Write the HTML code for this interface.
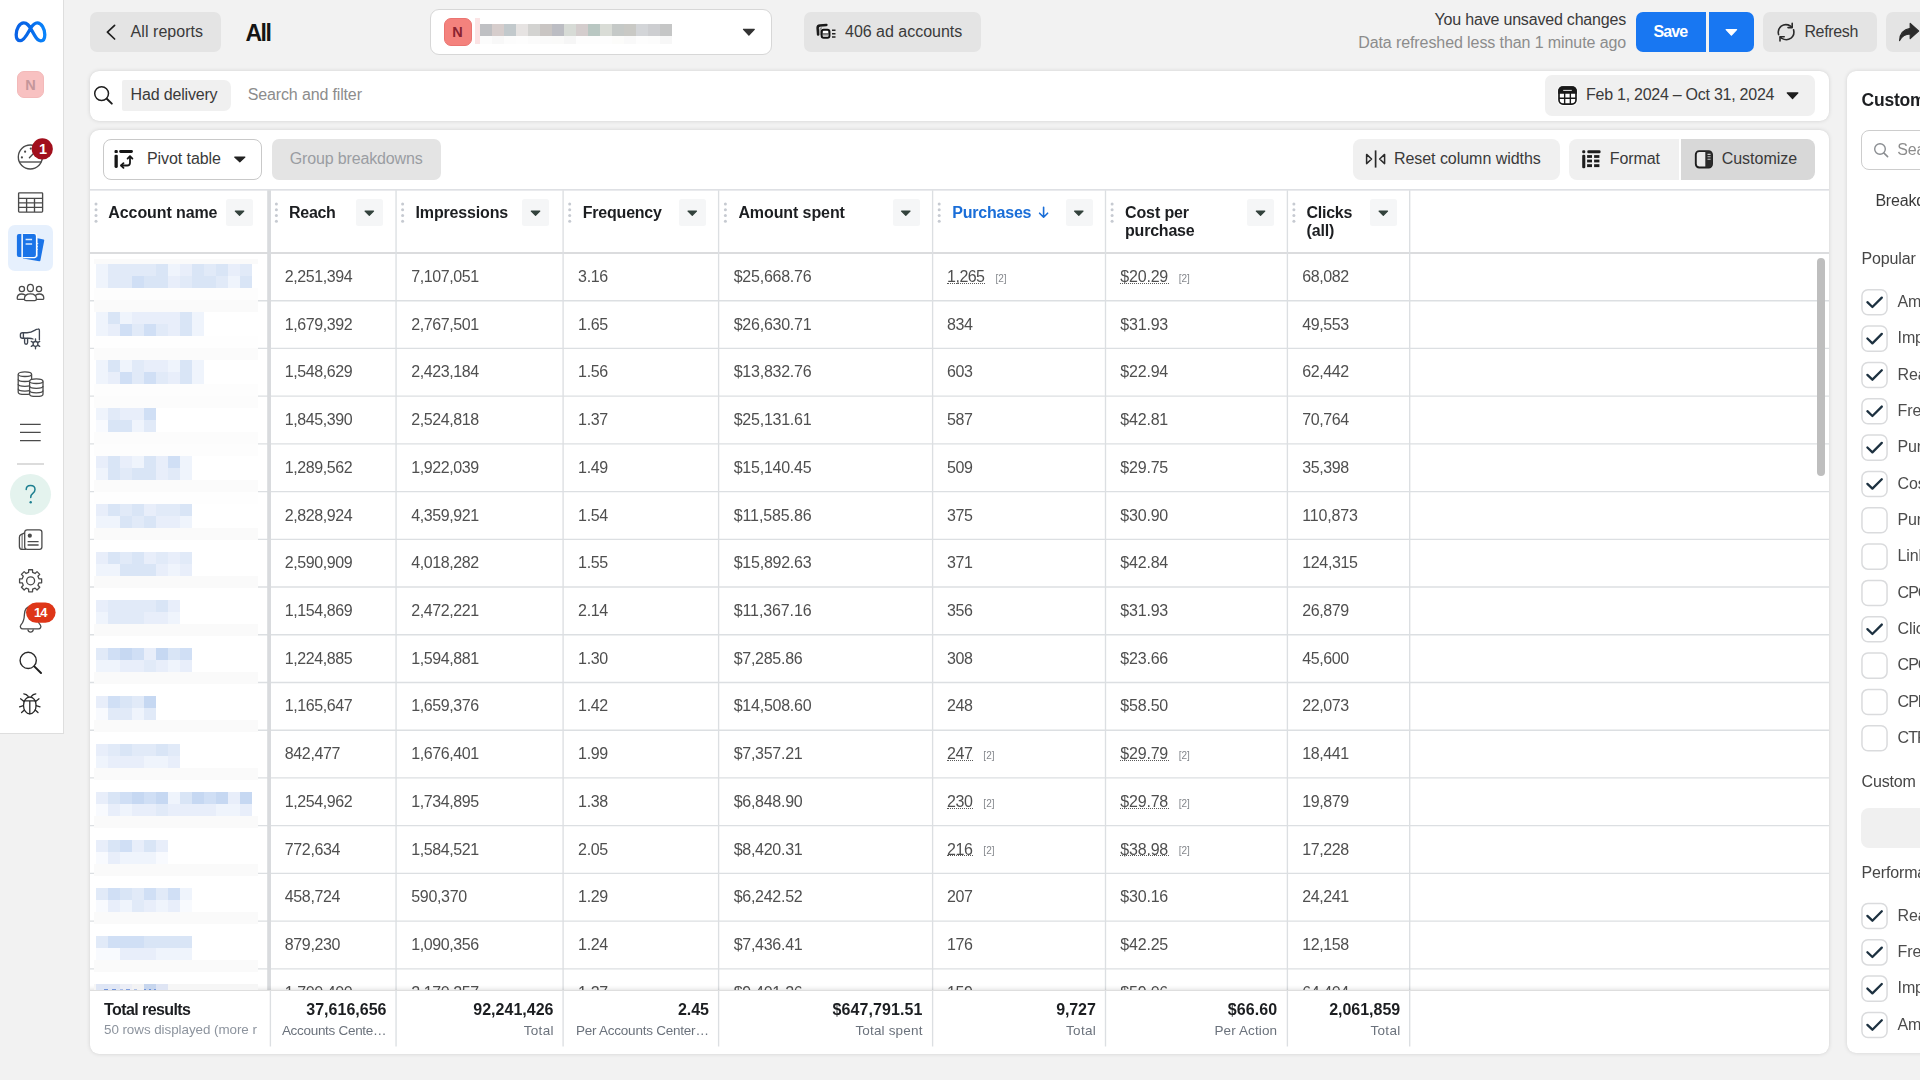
<!DOCTYPE html>
<html><head><meta charset="utf-8"><title>Reports</title>
<style>
html,body{margin:0;padding:0;}
body{width:1920px;height:1080px;overflow:hidden;background:#f2f2f2;font-family:"Liberation Sans",sans-serif;position:relative;}
.a{position:absolute;display:block;}
.t{position:absolute;white-space:nowrap;display:block;}
</style></head><body>
<div class="a" style="left:0.00px;top:0.00px;width:63.60px;height:734.40px;background:#fff;border-right:1.5px solid #dedede;border-bottom:1.4px solid #dedede;box-sizing:border-box;"></div>
<svg class="a" style="left:10px;top:16px;" width="42" height="32" viewBox="0 0 42 32"><defs><linearGradient id="mg" x1="0" y1="0" x2="1" y2="0"><stop offset="0" stop-color="#0a63e6"/><stop offset="0.45" stop-color="#0668e8"/><stop offset="1" stop-color="#0a84fb"/></linearGradient></defs><path d="M10.3 24.7 C7.5 24.7 6.2 22 6.2 18.7 C6.2 13 9.5 6.8 13.7 6.8 C17.2 6.8 19 9.6 21.3 13.6 L24.6 19.4 C26.6 22.9 28.2 24.8 30.8 24.8 C33.5 24.8 34.8 22.5 34.8 18.7 C34.8 13 31.5 6.8 27.3 6.8 C24.4 6.8 22.4 9.2 20.4 12.6 C18 16.8 14.3 24.7 10.3 24.7 Z" fill="none" stroke="url(#mg)" stroke-width="3.3" stroke-linejoin="round"/></svg>
<div class="a" style="left:17.00px;top:70.90px;width:26.90px;height:26.80px;background:#f8c1c1;border-radius:7px;border:1px solid #f3b9b9;box-sizing:border-box;"></div>
<span class="t" style="top:75.00px;font-size:14.5px;line-height:20px;color:#c4969a;font-weight:700;left:25.30px;">N</span>
<svg class="a" style="left:14px;top:136px;" width="44" height="38" viewBox="0 0 44 38"><g fill="none" stroke="#4a4a4a" stroke-width="1.35"><circle cx="16.3" cy="21" r="12"/><path d="M5.3 26 H27.3"/><path d="M15.4 21.7 L19 18" stroke-linecap="round"/></g><g fill="#4a4a4a"><circle cx="7.9" cy="21.4" r="1.1"/><circle cx="11.1" cy="15.7" r="1.1"/><circle cx="16.8" cy="12.6" r="1.1"/></g><circle cx="28.3" cy="12.9" r="10.6" fill="#a10f1c"/></svg>
<span class="t" style="top:139.00px;font-size:14.5px;line-height:20px;color:#fff;font-weight:700;left:39.00px;">1</span>
<svg class="a" style="left:16px;top:190px;" width="30" height="26" viewBox="0 0 30 26"><g fill="none" stroke="#4a4a4a" stroke-width="1.35"><rect x="2.6" y="2.8" width="24" height="19.3" rx="0.8"/><path d="M2.6 8.4 H26.6 M2.6 12.9 H26.6 M2.6 17.4 H26.6 M10.6 8.4 V22 M18.5 8.4 V22"/></g></svg>
<div class="a" style="left:7.90px;top:225.10px;width:45.20px;height:45.60px;background:#e6f0fd;border-radius:7px;"></div>
<svg class="a" style="left:14px;top:230px;" width="34" height="36" viewBox="0 0 34 36"><g fill="#1b74e8"><path d="M23.6 8.2 L29.6 9.6 Q30.4 9.9 30.2 10.8 L26.4 30.4 Q26.2 31.4 25.2 31.2 L9.2 28.4 V26.6 H23.6 Z"/></g><rect x="8" y="3.2" width="15" height="25" rx="2.4" fill="#fff"/><g fill="#1b74e8"><path d="M4.9 4 H7.3 V27 H4.9 Q2.9 27 2.9 25 V6 Q2.9 4 4.9 4 Z"/><path d="M8.9 4 H20 Q21.9 4 21.9 6 V25 Q21.9 27 20 27 H8.9 Z"/></g><path d="M11.6 9.4 H18.1 M11.6 14 H18.1" stroke="#dbe9fc" stroke-width="1.5"/><path d="M22.6 13.5 h1.6 M22.6 16.5 h1.4 M22.6 19.5 h1.2" stroke="#e6f0fd" stroke-width="1.1"/></svg>
<svg class="a" style="left:14px;top:280px;" width="34" height="26" viewBox="0 0 34 26"><g fill="#fff" stroke="#4a4a4a" stroke-width="1.3" stroke-linejoin="round"><circle cx="7.9" cy="9" r="2.6"/><circle cx="25" cy="9" r="2.6"/><path d="M3.2 18.2 Q3.2 14 7.6 14 Q11.6 14 12 17 L12 19.4 H4.4 Q3.2 19.4 3.2 18.2 Z"/><path d="M29.8 18.2 Q29.8 14 25.4 14 Q21.4 14 21 17 L21 19.4 H28.6 Q29.8 19.4 29.8 18.2 Z"/><ellipse cx="16.4" cy="7.9" rx="3" ry="3.6"/><path d="M10.4 19 Q10.4 13.8 16.4 13.8 Q22.4 13.8 22.4 19 Q22.4 20.6 20.8 20.6 H12 Q10.4 20.6 10.4 19 Z"/></g></svg>
<svg class="a" style="left:16px;top:324px;" width="30" height="28" viewBox="0 0 30 28"><g fill="none" stroke="#3f4652" stroke-width="1.35" stroke-linecap="round" stroke-linejoin="round"><path d="M23.4 15.8 V6.4 Q23.4 4.9 21.9 5 Q20.6 5 18.6 6.4 Q15 8.7 11 8.7 H6.4 Q4.4 8.7 4.4 10.7 V12.2 Q4.4 14.2 6.4 14.2 H13 Q15.4 14.2 17 15"/><path d="M7.4 8.9 V14"/><path d="M8.6 14.4 V18.6 Q8.6 20.2 10.1 20.2 Q11.6 20.2 11.6 18.6 V14.4"/></g><g stroke="#3f4652" stroke-width="1.35" stroke-linecap="round"><path d="M19.5 15 V24.8 M15.3 17.4 L23.7 22.3 M15.3 22.3 L23.7 17.4"/></g><circle cx="19.5" cy="19.9" r="2.4" fill="#fff" stroke="#3f4652" stroke-width="1.3"/></svg>
<svg class="a" style="left:14px;top:368px;" width="34" height="32" viewBox="0 0 34 32"><g fill="#fff" stroke="#4a4a4a" stroke-width="1.3"><path d="M4.2 6.4 V24.2 Q4.2 26.4 10.9 26.4 Q17.6 26.4 17.6 24.2 V6.4"/><ellipse cx="10.9" cy="6.2" rx="6.7" ry="2.3"/><path d="M4.2 11.2 Q4.2 13.5 10.9 13.5 Q17.6 13.5 17.6 11.2 M4.2 16 Q4.2 18.3 10.9 18.3 Q17.6 18.3 17.6 16 M4.2 20.8 Q4.2 23.1 10.9 23.1 Q17.6 23.1 17.6 20.8" fill="none"/><path d="M15.6 13.4 V26.2 Q15.6 28.4 22.3 28.4 Q29 28.4 29 26.2 V13.4"/><ellipse cx="22.3" cy="13.2" rx="6.7" ry="2.3"/><path d="M15.6 18 Q15.6 20.3 22.3 20.3 Q29 20.3 29 18 M15.6 22.6 Q15.6 24.9 22.3 24.9 Q29 24.9 29 22.6" fill="none"/></g></svg>
<svg class="a" style="left:18px;top:420px;" width="26" height="24" viewBox="0 0 26 24"><path d="M2 4.4 H22.7 M2 12.4 H22.7 M2 20.6 H22.7" stroke="#4a4a4a" stroke-width="1.35"/></svg>
<div class="a" style="left:17.00px;top:463.40px;width:27.00px;height:1.20px;background:#dcdcdc;"></div>
<div class="a" style="left:10.00px;top:473.90px;width:41.00px;height:41.00px;background:#e4f3ee;border-radius:21px;"></div>
<svg class="a" style="left:22px;top:482px;" width="18" height="26" viewBox="0 0 18 26"><path d="M4.2 7.6 Q4.2 3.4 8.6 3.4 Q13 3.4 13 7.4 Q13 9.8 10.8 11.4 Q8.7 12.9 8.7 15.6" fill="none" stroke="#1d7f90" stroke-width="1.5" stroke-linecap="round"/><circle cx="8.7" cy="20.2" r="1.2" fill="#1d7f90"/></svg>
<svg class="a" style="left:16px;top:526px;" width="30" height="28" viewBox="0 0 30 28"><g fill="none" stroke="#4a4a4a" stroke-width="1.3" stroke-linejoin="round"><rect x="8.7" y="3.8" width="17.2" height="19.6" rx="2.4"/><path d="M8.7 6.8 L5 8.6 Q3.4 9.4 3.4 11.2 V20.4 Q3.4 23.4 6.4 23.4 H10"/><path d="M6.1 8.4 V22.8" stroke-width="0.9"/><path d="M11.6 15.7 H22.6 M11.6 19 H22.6"/></g><circle cx="13.8" cy="9.7" r="2.1" fill="#4a4a4a"/></svg>
<svg class="a" style="left:16px;top:566px;" width="30" height="30" viewBox="0 0 30 30"><path d="M12.67 3.77 L16.53 3.77 L16.61 6.44 L19.09 7.47 L21.04 5.64 L23.76 8.36 L21.93 10.31 L22.96 12.79 L25.63 12.87 L25.63 16.73 L22.96 16.81 L21.93 19.29 L23.76 21.24 L21.04 23.96 L19.09 22.13 L16.61 23.16 L16.53 25.83 L12.67 25.83 L12.59 23.16 L10.11 22.13 L8.16 23.96 L5.44 21.24 L7.27 19.29 L6.24 16.81 L3.57 16.73 L3.57 12.87 L6.24 12.79 L7.27 10.31 L5.44 8.36 L8.16 5.64 L10.11 7.47 L12.59 6.44 Z" fill="none" stroke="#4a4a4a" stroke-width="1.3" stroke-linejoin="round"/><circle cx="14.6" cy="14.8" r="4" fill="none" stroke="#4a4a4a" stroke-width="1.3"/></svg>
<svg class="a" style="left:16px;top:600px;" width="44" height="36" viewBox="0 0 44 36"><g fill="none" stroke="#4a4a4a" stroke-width="1.3" stroke-linejoin="round"><path d="M14.6 6.6 Q8.6 6.8 8.4 14.6 Q8.2 21.6 5 24.8 Q3.8 26.2 4.6 27.6 Q5.2 28.8 6.8 28.8 H22.4 Q24 28.8 24.6 27.6 Q25.4 26.2 24.2 24.8 Q21 21.6 20.8 14.6 Q20.6 6.8 14.6 6.6 Z"/><path d="M11.8 29.4 Q12.4 32.2 14.6 32.2 Q16.8 32.2 17.4 29.4"/></g><rect x="10" y="2.4" width="29.6" height="20.4" rx="10.2" fill="#de3618"/></svg>
<span class="t" style="top:603.00px;font-size:13px;line-height:20px;color:#fff;font-weight:700;letter-spacing:-0.758px;left:33.90px;">14</span>
<svg class="a" style="left:16px;top:648px;" width="30" height="30" viewBox="0 0 30 30"><circle cx="12.2" cy="12.4" r="8.1" fill="none" stroke="#2a2a2a" stroke-width="1.4"/><path d="M18.3 18.4 L25 25" stroke="#1e1e1e" stroke-width="2" stroke-linecap="round"/></svg>
<svg class="a" style="left:16px;top:690px;" width="30" height="28" viewBox="0 0 30 28"><g fill="none" stroke="#2a2a2a" stroke-width="1.3" stroke-linecap="round"><ellipse cx="13.8" cy="15.4" rx="6.3" ry="8.4"/><path d="M7.9 10.8 H19.7 M13.8 10.8 V23.8"/><path d="M12.2 6.4 Q10.6 4 7.8 3.8 M15.4 6.4 Q17 4 19.8 3.8"/><path d="M8 11.6 L4.6 8.8 M7.4 15.6 L3.6 16.8 M8.4 20 L5.6 22.6 M19.6 11.6 L23 8.8 M20.2 15.6 L24 16.8 M19.2 20 L22 22.6"/></g></svg>
<div class="a" style="left:90.00px;top:11.50px;width:131.00px;height:40.50px;background:#e4e4e4;border-radius:7px;"></div>
<svg class="a" style="left:103px;top:22px;" width="16" height="20" viewBox="0 0 16 20"><path d="M11.6 3.4 L4.4 10.2 L11.6 17" fill="none" stroke="#1e1e1e" stroke-width="1.7" stroke-linecap="round" stroke-linejoin="round"/></svg>
<span class="t" style="top:22.00px;font-size:16px;line-height:20px;color:#3a3a3a;letter-spacing:0.048px;left:130.60px;">All reports</span>
<span class="t" style="top:23.00px;font-size:23px;line-height:20px;color:#141414;font-weight:700;letter-spacing:-1.395px;left:245.40px;">All</span>
<div class="a" style="left:430.40px;top:9.20px;width:341.30px;height:45.60px;background:#fff;border-radius:9px;border:1.5px solid #d7d7d7;box-sizing:border-box;"></div>
<div class="a" style="left:444.20px;top:18.00px;width:27.40px;height:27.60px;background:#f4827d;border-radius:7px;border:1px solid #ea7471;box-sizing:border-box;"></div>
<span class="t" style="top:22.00px;font-size:14.5px;line-height:20px;color:#8a2230;font-weight:700;left:452.20px;">N</span>
<div class="a" style="left:475.00px;top:18.00px;width:5.00px;height:26.00px;background:#fbe4e5;"></div>
<svg class="a" style="left:480px;top:24px;shape-rendering:crispEdges;" width="192" height="20" viewBox="0 0 192 20"><rect x="0" y="0" width="12.2" height="12" fill="#bfc0c3"/><rect x="0" y="12" width="12.2" height="8" fill="#fcfcfc"/><rect x="12" y="0" width="12.2" height="12" fill="#d6cdcc"/><rect x="12" y="12" width="12.2" height="8" fill="#f8f8f8"/><rect x="24" y="0" width="12.2" height="12" fill="#c2c9cc"/><rect x="24" y="12" width="12.2" height="8" fill="#fcfcfc"/><rect x="36" y="0" width="12.2" height="12" fill="#e6e3e2"/><rect x="36" y="12" width="12.2" height="8" fill="#fdfdfd"/><rect x="48" y="0" width="12.2" height="12" fill="#d3d3d1"/><rect x="48" y="12" width="12.2" height="8" fill="#fbfbfb"/><rect x="60" y="0" width="12.2" height="12" fill="#c9c5c3"/><rect x="60" y="12" width="12.2" height="8" fill="#fafafa"/><rect x="72" y="0" width="12.2" height="12" fill="#bcbdc3"/><rect x="72" y="12" width="12.2" height="8" fill="#fafaf9"/><rect x="84" y="0" width="12.2" height="12" fill="#d7dbd6"/><rect x="84" y="12" width="12.2" height="8" fill="#f6f6f6"/><rect x="96" y="0" width="12.2" height="12" fill="#d4cdcd"/><rect x="96" y="12" width="12.2" height="8" fill="#fdfdfd"/><rect x="108" y="0" width="12.2" height="12" fill="#b9c7c2"/><rect x="108" y="12" width="12.2" height="8" fill="#fdfdfd"/><rect x="120" y="0" width="12.2" height="12" fill="#d9dcd6"/><rect x="120" y="12" width="12.2" height="8" fill="#fdfdfd"/><rect x="132" y="0" width="12.2" height="12" fill="#c5c9c7"/><rect x="132" y="12" width="12.2" height="8" fill="#fcfcfa"/><rect x="144" y="0" width="12.2" height="12" fill="#c9c9c5"/><rect x="144" y="12" width="12.2" height="8" fill="#f9f9f9"/><rect x="156" y="0" width="12.2" height="12" fill="#d3d5d8"/><rect x="156" y="12" width="12.2" height="8" fill="#fdfdfd"/><rect x="168" y="0" width="12.2" height="12" fill="#cdced1"/><rect x="168" y="12" width="12.2" height="8" fill="#fcfcfc"/><rect x="180" y="0" width="12.2" height="12" fill="#c5c6c6"/><rect x="180" y="12" width="12.2" height="8" fill="#f7f7f7"/></svg>
<svg class="a" style="left:741px;top:27px;" width="15" height="10" viewBox="0 0 15 10"><g transform="translate(0.90 0.70)"><path d="M1.6 1.6 H12.40 L7.00 7.50 Z" fill="#333" stroke="#333" stroke-width="1.2" stroke-linejoin="round"/></g></svg>
<div class="a" style="left:803.75px;top:11.50px;width:176.90px;height:40.50px;background:#e4e4e4;border-radius:7px;"></div>
<svg class="a" style="left:815px;top:22px;" width="22" height="18" viewBox="0 0 22 18"><path d="M3.1 12.6 L2.6 6 Q2.5 3.6 5 3.4 L11.4 2.9" fill="none" stroke="#1a1a1a" stroke-width="2.5" stroke-linecap="round" stroke-linejoin="round"/><path d="M5 13 V8 Q5 6 7 5.9" fill="none" stroke="#8f8f8f" stroke-width="1.3"/><rect x="6.7" y="7.8" width="7.7" height="8" rx="2" fill="#fff" stroke="#111" stroke-width="2.1"/><rect x="7.9" y="12.2" width="5.4" height="2.5" fill="#b9b9b9"/><path d="M7.7 11.9 H13.4" stroke="#111" stroke-width="0.9"/><path d="M17 8.3 H20.5 M17 11.7 H20.5 M17 15.1 H20.5" stroke="#222" stroke-width="1.5"/></svg>
<span class="t" style="top:22.00px;font-size:16px;line-height:20px;color:#3a3a3a;letter-spacing:-0.015px;left:845.00px;">406 ad accounts</span>
<span class="t" style="top:10.00px;font-size:16px;line-height:20px;color:#3a3a3a;letter-spacing:-0.191px;right:293.99px;">You have unsaved changes</span>
<span class="t" style="top:33.00px;font-size:16px;line-height:20px;color:#8c8c8c;letter-spacing:-0.090px;right:293.89px;">Data refreshed less than 1 minute ago</span>
<div class="a" style="left:1635.60px;top:11.70px;width:70.40px;height:40.30px;background:#1877f2;border-radius:7px 0 0 7px;"></div>
<div class="a" style="left:1708.60px;top:11.70px;width:45.50px;height:40.30px;background:#1877f2;border-radius:0 7px 7px 0;"></div>
<span class="t" style="top:22.00px;font-size:16px;line-height:20px;color:#fff;font-weight:700;letter-spacing:-0.922px;left:1653.60px;">Save</span>
<svg class="a" style="left:1724px;top:27px;" width="15" height="10" viewBox="0 0 15 10"><g transform="translate(0.60 0.90)"><path d="M1.6 1.6 H12.00 L6.80 7.30 Z" fill="#fff" stroke="#fff" stroke-width="1.2" stroke-linejoin="round"/></g></svg>
<div class="a" style="left:1763.30px;top:11.70px;width:113.60px;height:40.30px;background:#e4e4e4;border-radius:7px;"></div>
<svg class="a" style="left:1775px;top:21px;" width="22" height="22" viewBox="0 0 22 22"><g fill="none" stroke="#2a2a2a" stroke-width="1.6" stroke-linecap="round" stroke-linejoin="round"><path d="M3.6 13.6 Q2.2 8.4 6.2 5.2 Q10.6 2.2 15.4 5 L16.8 6.2"/><path d="M17.2 2.4 V6.6 H13"/><path d="M18.6 8.8 Q20 14 16 17.2 Q11.6 20.2 6.8 17.4 L5.4 16.2"/><path d="M5 20 V15.8 H9.2"/></g></svg>
<span class="t" style="top:22.00px;font-size:16px;line-height:20px;color:#3a3a3a;letter-spacing:-0.337px;left:1804.40px;">Refresh</span>
<div class="a" style="left:1886.00px;top:11.70px;width:60.00px;height:40.30px;background:#e4e4e4;border-radius:7px;"></div>
<svg class="a" style="left:1897px;top:20px;" width="24" height="24" viewBox="0 0 24 24"><path d="M13.2 3.4 L21.6 11 L13.2 18.6 V14 Q6 14 2.6 20.6 Q3 10.2 13.2 8.4 Z" fill="#2b2b2b" stroke="#2b2b2b" stroke-width="1.2" stroke-linejoin="round"/></svg>
<div class="a" style="left:89.70px;top:70.70px;width:1739.40px;height:50.40px;background:#fff;border-radius:9px;box-shadow:0 0 4.5px rgba(0,0,0,0.13),0 0 1px rgba(0,0,0,0.05);"></div>
<svg class="a" style="left:92px;top:84px;" width="24" height="24" viewBox="0 0 24 24"><circle cx="9.6" cy="9.6" r="6.9" fill="none" stroke="#1e1e1e" stroke-width="1.5"/><path d="M14.8 14.8 L19.8 19.6" stroke="#1e1e1e" stroke-width="2" stroke-linecap="round"/></svg>
<div class="a" style="left:121.50px;top:80.00px;width:109.80px;height:31.00px;background:#f0f0f0;border-radius:2px 7px 7px 2px;"></div>
<span class="t" style="top:85.00px;font-size:16px;line-height:20px;color:#3a3a3a;letter-spacing:-0.175px;left:130.60px;">Had delivery</span>
<span class="t" style="top:85.00px;font-size:16px;line-height:20px;color:#8c8c8c;letter-spacing:-0.144px;left:247.75px;">Search and filter</span>
<div class="a" style="left:1544.70px;top:75.00px;width:270.70px;height:41.00px;background:#f0f0f0;border-radius:7px;"></div>
<svg class="a" style="left:1555px;top:84px;" width="25" height="24" viewBox="0 0 25 24"><rect x="2.4" y="1.5" width="20.2" height="20.2" rx="5.2" fill="#fff"/><rect x="4" y="3.1" width="17" height="17" rx="4" fill="#fff" stroke="#1a1a1a" stroke-width="1.7"/><path d="M4 8.8 V7.1 Q4 3.1 8 3.1 H17 Q21 3.1 21 7.1 V8.8 Z" fill="#1a1a1a" stroke="#1a1a1a" stroke-width="1.7"/><path d="M8.6 6.4 H16.4" stroke="#fff" stroke-width="0.9" stroke-linecap="round"/><path d="M4 14.3 H21 M9.65 8.8 V20.1 M15.35 8.8 V20.1" stroke="#1a1a1a" stroke-width="1.4"/></svg>
<span class="t" style="top:85.00px;font-size:16px;line-height:20px;color:#3a3a3a;letter-spacing:-0.255px;left:1586.00px;">Feb 1, 2024 – Oct 31, 2024</span>
<svg class="a" style="left:1785px;top:91px;" width="15" height="10" viewBox="0 0 15 10"><g transform="translate(0.60 0.30)"><path d="M1.6 1.6 H12.30 L6.95 7.30 Z" fill="#1e1e1e" stroke="#1e1e1e" stroke-width="1.2" stroke-linejoin="round"/></g></svg>
<div class="a" style="left:89.70px;top:129.50px;width:1739.40px;height:924.00px;background:#fff;border-radius:9px;box-shadow:0 0 4.5px rgba(0,0,0,0.13),0 0 1px rgba(0,0,0,0.05);"></div>
<div class="a" style="left:103.40px;top:139.00px;width:158.40px;height:40.50px;background:#fff;border-radius:8px;border:1.4px solid #c9c9c9;box-sizing:border-box;"></div>
<svg class="a" style="left:112px;top:148px;" width="24" height="24" viewBox="0 0 24 24"><g fill="#161616"><rect x="2.5" y="2" width="3.3" height="3.1" rx="1.2"/><rect x="2.5" y="6.7" width="3.3" height="13.2" rx="1.3"/><rect x="7.2" y="2" width="13.7" height="2.9" rx="1.3"/></g><g stroke="#161616" fill="none" stroke-linecap="round" stroke-linejoin="round" stroke-width="1.8"><path d="M9.2 17.5 H15.2 Q18 17.5 18 14.7 V8.6"/><path d="M11.5 15.1 L9.1 17.5 L11.5 19.9"/><path d="M15.6 10.6 L18 8.2 L20.4 10.6"/></g></svg>
<span class="t" style="top:149.00px;font-size:16px;line-height:20px;color:#3a3a3a;letter-spacing:-0.061px;left:146.90px;">Pivot table</span>
<svg class="a" style="left:233px;top:155px;" width="14" height="9" viewBox="0 0 14 9"><g transform="translate(0.10 0.50)"><path d="M1.6 1.6 H11.80 L6.70 6.30 Z" fill="#222" stroke="#222" stroke-width="1.2" stroke-linejoin="round"/></g></svg>
<div class="a" style="left:271.90px;top:139.00px;width:168.80px;height:40.50px;background:#e4e4e4;border-radius:7px;"></div>
<span class="t" style="top:149.00px;font-size:16px;line-height:20px;color:#9a9da2;letter-spacing:-0.152px;left:289.80px;">Group breakdowns</span>
<div class="a" style="left:1353.00px;top:139.00px;width:206.50px;height:40.50px;background:#f0f0f0;border-radius:8px;"></div>
<svg class="a" style="left:1363px;top:148px;" width="26" height="22" viewBox="0 0 26 22"><g fill="none" stroke="#2a2a2a" stroke-width="1.5" stroke-linejoin="round"><path d="M12.6 2.4 V19.6" stroke-width="1.7"/><path d="M3.6 6.4 L8.6 11 L3.6 15.6 Z"/><path d="M21.6 6.4 L16.6 11 L21.6 15.6 Z"/></g></svg>
<span class="t" style="top:149.00px;font-size:16px;line-height:20px;color:#3a3a3a;letter-spacing:-0.039px;left:1393.90px;">Reset column widths</span>
<div class="a" style="left:1569.00px;top:139.00px;width:109.80px;height:40.50px;background:#f0f0f0;border-radius:8px 0 0 8px;"></div>
<svg class="a" style="left:1579px;top:148px;" width="24" height="24" viewBox="0 0 24 24"><g fill="#1e1e1e"><rect x="3.2" y="2.2" width="3.1" height="3" rx="1.2"/><rect x="3.2" y="6.7" width="3.1" height="13.5" rx="1.3"/><rect x="8.3" y="2.2" width="13.3" height="3" rx="1.3"/><rect x="8.1" y="7.1" width="4.9" height="2.8"/><rect x="15.1" y="7.1" width="5.3" height="2.8"/><rect x="8.1" y="11.6" width="4.9" height="2.8"/><rect x="15.1" y="11.6" width="5.3" height="2.8"/><rect x="8.1" y="16.2" width="4.9" height="2.9"/><rect x="15.1" y="16.2" width="5.3" height="2.9"/></g></svg>
<span class="t" style="top:149.00px;font-size:16px;line-height:20px;color:#3a3a3a;letter-spacing:-0.073px;left:1609.70px;">Format</span>
<div class="a" style="left:1681.00px;top:139.00px;width:134.30px;height:40.50px;background:#d8d8d8;border-radius:0 8px 8px 0;"></div>
<svg class="a" style="left:1692px;top:148px;" width="24" height="24" viewBox="0 0 24 24"><rect x="3.8" y="3.1" width="16.2" height="16.4" rx="3.4" fill="#e9e9e9" stroke="#1e1e1e" stroke-width="1.9"/><path d="M13.3 3.1 H16.6 Q20 3.1 20 6.5 V16.1 Q20 19.5 16.6 19.5 H13.3 Z" fill="#2a2a2a"/><path d="M15.5 6.4 H18.6 M15.5 8.8 H18.6 M15.5 11.2 H18.6" stroke="#c9c9c9" stroke-width="1.1"/></svg>
<span class="t" style="top:149.00px;font-size:16px;line-height:20px;color:#3a3a3a;letter-spacing:-0.009px;left:1721.70px;">Customize</span>
<div class="a" style="left:89.7px;top:189.2px;width:1739.4px;height:801.40px;overflow:hidden;will-change:transform;">
<div class="a" style="left:-89.7px;top:-189.2px;width:1920px;height:1080px;">
<svg class="a" style="left:89px;top:189px;" width="1741" height="901" viewBox="0 0 1741 901"><g transform="translate(0.70 0.20)"><path d="M0 0.75 H1739.4" stroke="#d3d6db" stroke-width="1.3"/><path d="M0 63.80 H1739.4" stroke="#dbdcde" stroke-width="2.0"/><path d="M0 111.52 H1739.4" stroke="#dcdfe2" stroke-width="1.35"/><path d="M0 159.24 H1739.4" stroke="#dcdfe2" stroke-width="1.35"/><path d="M0 206.96 H1739.4" stroke="#dcdfe2" stroke-width="1.35"/><path d="M0 254.68 H1739.4" stroke="#dcdfe2" stroke-width="1.35"/><path d="M0 302.40 H1739.4" stroke="#dcdfe2" stroke-width="1.35"/><path d="M0 350.12 H1739.4" stroke="#dcdfe2" stroke-width="1.35"/><path d="M0 397.84 H1739.4" stroke="#dcdfe2" stroke-width="1.35"/><path d="M0 445.56 H1739.4" stroke="#dcdfe2" stroke-width="1.35"/><path d="M0 493.28 H1739.4" stroke="#dcdfe2" stroke-width="1.35"/><path d="M0 541.00 H1739.4" stroke="#dcdfe2" stroke-width="1.35"/><path d="M0 588.72 H1739.4" stroke="#dcdfe2" stroke-width="1.35"/><path d="M0 636.44 H1739.4" stroke="#dcdfe2" stroke-width="1.35"/><path d="M0 684.16 H1739.4" stroke="#dcdfe2" stroke-width="1.35"/><path d="M0 731.88 H1739.4" stroke="#dcdfe2" stroke-width="1.35"/><path d="M0 779.60 H1739.4" stroke="#dcdfe2" stroke-width="1.35"/><path d="M0 827.32 H1739.4" stroke="#dcdfe2" stroke-width="1.35"/><path d="M306.35 1 V900" stroke="#dcdfe2" stroke-width="1.35"/><path d="M473.40 1 V900" stroke="#dcdfe2" stroke-width="1.35"/><path d="M628.90 1 V900" stroke="#dcdfe2" stroke-width="1.35"/><path d="M842.90 1 V900" stroke="#dcdfe2" stroke-width="1.35"/><path d="M1015.80 1 V900" stroke="#dcdfe2" stroke-width="1.35"/><path d="M1197.70 1 V900" stroke="#dcdfe2" stroke-width="1.35"/><path d="M1320.00 1 V900" stroke="#dcdfe2" stroke-width="1.35"/><path d="M179.40 1 V900" stroke="#d9dbde" stroke-width="3.8"/></g></svg>
<svg class="a" style="left:94px;top:202px;" width="4" height="22" viewBox="0 0 4 22"><g transform="translate(0.40 0.50)"><circle cx="1.6" cy="1.60" r="1.5" fill="#c6cad1"/><circle cx="1.6" cy="7.35" r="1.5" fill="#c6cad1"/><circle cx="1.6" cy="13.10" r="1.5" fill="#c6cad1"/><circle cx="1.6" cy="18.85" r="1.5" fill="#c6cad1"/></g></svg>
<span class="t" style="top:203.00px;font-size:16px;line-height:20px;color:#1c1e21;font-weight:700;letter-spacing:-0.094px;left:108.00px;">Account name</span>
<div class="a" style="left:226.00px;top:199.40px;width:27.00px;height:26.90px;background:#f5f6f7;border-radius:2.5px;"></div>
<svg class="a" style="left:233px;top:209px;" width="13" height="8" viewBox="0 0 13 8"><g transform="translate(0.70 0.50)"><path d="M1.6 1.6 H10.10 L5.85 5.80 Z" fill="#33423c" stroke="#33423c" stroke-width="1.2" stroke-linejoin="round"/></g></svg>
<svg class="a" style="left:274px;top:202px;" width="4" height="22" viewBox="0 0 4 22"><g transform="translate(0.80 0.50)"><circle cx="1.6" cy="1.60" r="1.5" fill="#c6cad1"/><circle cx="1.6" cy="7.35" r="1.5" fill="#c6cad1"/><circle cx="1.6" cy="13.10" r="1.5" fill="#c6cad1"/><circle cx="1.6" cy="18.85" r="1.5" fill="#c6cad1"/></g></svg>
<span class="t" style="top:203.00px;font-size:16px;line-height:20px;color:#1c1e21;font-weight:700;letter-spacing:-0.318px;left:288.75px;">Reach</span>
<div class="a" style="left:355.75px;top:199.40px;width:27.00px;height:26.90px;background:#f5f6f7;border-radius:2.5px;"></div>
<svg class="a" style="left:363px;top:209px;" width="13" height="8" viewBox="0 0 13 8"><g transform="translate(0.45 0.50)"><path d="M1.6 1.6 H10.10 L5.85 5.80 Z" fill="#33423c" stroke="#33423c" stroke-width="1.2" stroke-linejoin="round"/></g></svg>
<svg class="a" style="left:401px;top:202px;" width="4" height="22" viewBox="0 0 4 22"><g transform="translate(0.00 0.50)"><circle cx="1.6" cy="1.60" r="1.5" fill="#c6cad1"/><circle cx="1.6" cy="7.35" r="1.5" fill="#c6cad1"/><circle cx="1.6" cy="13.10" r="1.5" fill="#c6cad1"/><circle cx="1.6" cy="18.85" r="1.5" fill="#c6cad1"/></g></svg>
<span class="t" style="top:203.00px;font-size:16px;line-height:20px;color:#1c1e21;font-weight:700;letter-spacing:-0.160px;left:415.25px;">Impressions</span>
<div class="a" style="left:522.00px;top:199.40px;width:27.00px;height:26.90px;background:#f5f6f7;border-radius:2.5px;"></div>
<svg class="a" style="left:529px;top:209px;" width="13" height="8" viewBox="0 0 13 8"><g transform="translate(0.70 0.50)"><path d="M1.6 1.6 H10.10 L5.85 5.80 Z" fill="#33423c" stroke="#33423c" stroke-width="1.2" stroke-linejoin="round"/></g></svg>
<svg class="a" style="left:568px;top:202px;" width="4" height="22" viewBox="0 0 4 22"><g transform="translate(0.10 0.50)"><circle cx="1.6" cy="1.60" r="1.5" fill="#c6cad1"/><circle cx="1.6" cy="7.35" r="1.5" fill="#c6cad1"/><circle cx="1.6" cy="13.10" r="1.5" fill="#c6cad1"/><circle cx="1.6" cy="18.85" r="1.5" fill="#c6cad1"/></g></svg>
<span class="t" style="top:203.00px;font-size:16px;line-height:20px;color:#1c1e21;font-weight:700;letter-spacing:-0.226px;left:582.50px;">Frequency</span>
<div class="a" style="left:678.70px;top:199.40px;width:27.00px;height:26.90px;background:#f5f6f7;border-radius:2.5px;"></div>
<svg class="a" style="left:686px;top:209px;" width="13" height="8" viewBox="0 0 13 8"><g transform="translate(0.40 0.50)"><path d="M1.6 1.6 H10.10 L5.85 5.80 Z" fill="#33423c" stroke="#33423c" stroke-width="1.2" stroke-linejoin="round"/></g></svg>
<svg class="a" style="left:723px;top:202px;" width="4" height="22" viewBox="0 0 4 22"><g transform="translate(0.80 0.50)"><circle cx="1.6" cy="1.60" r="1.5" fill="#c6cad1"/><circle cx="1.6" cy="7.35" r="1.5" fill="#c6cad1"/><circle cx="1.6" cy="13.10" r="1.5" fill="#c6cad1"/><circle cx="1.6" cy="18.85" r="1.5" fill="#c6cad1"/></g></svg>
<span class="t" style="top:203.00px;font-size:16px;line-height:20px;color:#1c1e21;font-weight:700;letter-spacing:-0.095px;left:738.10px;">Amount spent</span>
<div class="a" style="left:892.25px;top:199.40px;width:27.00px;height:26.90px;background:#f5f6f7;border-radius:2.5px;"></div>
<svg class="a" style="left:899px;top:209px;" width="13" height="8" viewBox="0 0 13 8"><g transform="translate(0.95 0.50)"><path d="M1.6 1.6 H10.10 L5.85 5.80 Z" fill="#33423c" stroke="#33423c" stroke-width="1.2" stroke-linejoin="round"/></g></svg>
<svg class="a" style="left:937px;top:202px;" width="4" height="22" viewBox="0 0 4 22"><g transform="translate(0.60 0.50)"><circle cx="1.6" cy="1.60" r="1.5" fill="#c6cad1"/><circle cx="1.6" cy="7.35" r="1.5" fill="#c6cad1"/><circle cx="1.6" cy="13.10" r="1.5" fill="#c6cad1"/><circle cx="1.6" cy="18.85" r="1.5" fill="#c6cad1"/></g></svg>
<span class="t" style="top:203.00px;font-size:16px;line-height:20px;color:#1a6ed8;font-weight:700;letter-spacing:-0.204px;left:951.90px;">Purchases</span>
<div class="a" style="left:1065.25px;top:199.40px;width:27.00px;height:26.90px;background:#f5f6f7;border-radius:2.5px;"></div>
<svg class="a" style="left:1072px;top:209px;" width="13" height="8" viewBox="0 0 13 8"><g transform="translate(0.95 0.50)"><path d="M1.6 1.6 H10.10 L5.85 5.80 Z" fill="#33423c" stroke="#33423c" stroke-width="1.2" stroke-linejoin="round"/></g></svg>
<svg class="a" style="left:1110px;top:202px;" width="4" height="22" viewBox="0 0 4 22"><g transform="translate(0.50 0.50)"><circle cx="1.6" cy="1.60" r="1.5" fill="#c6cad1"/><circle cx="1.6" cy="7.35" r="1.5" fill="#c6cad1"/><circle cx="1.6" cy="13.10" r="1.5" fill="#c6cad1"/><circle cx="1.6" cy="18.85" r="1.5" fill="#c6cad1"/></g></svg>
<span class="t" style="top:203.00px;font-size:16px;line-height:20px;color:#1c1e21;font-weight:700;letter-spacing:-0.114px;left:1124.70px;">Cost per</span>
<span class="t" style="top:221.00px;font-size:16px;line-height:20px;color:#1c1e21;font-weight:700;letter-spacing:-0.205px;left:1124.70px;">purchase</span>
<div class="a" style="left:1247.00px;top:199.40px;width:27.00px;height:26.90px;background:#f5f6f7;border-radius:2.5px;"></div>
<svg class="a" style="left:1254px;top:209px;" width="13" height="8" viewBox="0 0 13 8"><g transform="translate(0.70 0.50)"><path d="M1.6 1.6 H10.10 L5.85 5.80 Z" fill="#33423c" stroke="#33423c" stroke-width="1.2" stroke-linejoin="round"/></g></svg>
<svg class="a" style="left:1292px;top:202px;" width="4" height="22" viewBox="0 0 4 22"><g transform="translate(0.30 0.50)"><circle cx="1.6" cy="1.60" r="1.5" fill="#c6cad1"/><circle cx="1.6" cy="7.35" r="1.5" fill="#c6cad1"/><circle cx="1.6" cy="13.10" r="1.5" fill="#c6cad1"/><circle cx="1.6" cy="18.85" r="1.5" fill="#c6cad1"/></g></svg>
<span class="t" style="top:203.00px;font-size:16px;line-height:20px;color:#1c1e21;font-weight:700;letter-spacing:-0.268px;left:1306.20px;">Clicks</span>
<span class="t" style="top:221.00px;font-size:16px;line-height:20px;color:#1c1e21;font-weight:700;letter-spacing:-0.136px;left:1306.20px;">(all)</span>
<div class="a" style="left:1369.75px;top:199.40px;width:27.00px;height:26.90px;background:#f5f6f7;border-radius:2.5px;"></div>
<svg class="a" style="left:1377px;top:209px;" width="13" height="8" viewBox="0 0 13 8"><g transform="translate(0.45 0.50)"><path d="M1.6 1.6 H10.10 L5.85 5.80 Z" fill="#33423c" stroke="#33423c" stroke-width="1.2" stroke-linejoin="round"/></g></svg>
<svg class="a" style="left:1037px;top:205px;" width="13" height="15" viewBox="0 0 13 15"><path d="M6.6 2.2 V12 M2.6 8.2 L6.6 12.2 L10.6 8.2" fill="none" stroke="#1a6ed8" stroke-width="1.6" stroke-linecap="round" stroke-linejoin="round"/></svg>
<span class="t" style="top:267.00px;font-size:16px;line-height:20px;color:#4f4f4f;letter-spacing:-0.415px;left:284.40px;">2,251,394</span>
<span class="t" style="top:267.00px;font-size:16px;line-height:20px;color:#4f4f4f;letter-spacing:-0.415px;left:411.00px;">7,107,051</span>
<span class="t" style="top:267.00px;font-size:16px;line-height:20px;color:#4f4f4f;letter-spacing:-0.363px;left:577.80px;">3.16</span>
<span class="t" style="top:267.00px;font-size:16px;line-height:20px;color:#4f4f4f;letter-spacing:-0.241px;left:733.40px;">$25,668.76</span>
<span class="t" style="top:267.00px;font-size:16px;line-height:20px;color:#4f4f4f;letter-spacing:-0.534px;left:946.80px;">1,265</span>
<div class="a" style="left:946.20px;top:282.95px;width:38.90px;border-top:1.3px dotted #5a5a5a;"></div>
<span class="t" style="top:269.00px;font-size:10px;line-height:20px;color:#84878c;letter-spacing:0.041px;left:995.10px;">[2]</span>
<span class="t" style="top:267.00px;font-size:16px;line-height:20px;color:#4f4f4f;letter-spacing:-0.196px;left:1120.00px;">$20.29</span>
<div class="a" style="left:1119.40px;top:282.95px;width:48.95px;border-top:1.3px dotted #5a5a5a;"></div>
<span class="t" style="top:269.00px;font-size:10px;line-height:20px;color:#84878c;letter-spacing:0.041px;left:1178.35px;">[2]</span>
<span class="t" style="top:267.00px;font-size:16px;line-height:20px;color:#4f4f4f;letter-spacing:-0.417px;left:1301.90px;">68,082</span>
<span class="t" style="top:315.00px;font-size:16px;line-height:20px;color:#4f4f4f;letter-spacing:-0.415px;left:284.40px;">1,679,392</span>
<span class="t" style="top:315.00px;font-size:16px;line-height:20px;color:#4f4f4f;letter-spacing:-0.415px;left:411.00px;">2,767,501</span>
<span class="t" style="top:315.00px;font-size:16px;line-height:20px;color:#4f4f4f;letter-spacing:-0.363px;left:577.80px;">1.65</span>
<span class="t" style="top:315.00px;font-size:16px;line-height:20px;color:#4f4f4f;letter-spacing:-0.241px;left:733.40px;">$26,630.71</span>
<span class="t" style="top:315.00px;font-size:16px;line-height:20px;color:#4f4f4f;letter-spacing:-0.421px;left:946.80px;">834</span>
<span class="t" style="top:315.00px;font-size:16px;line-height:20px;color:#4f4f4f;letter-spacing:-0.196px;left:1120.00px;">$31.93</span>
<span class="t" style="top:315.00px;font-size:16px;line-height:20px;color:#4f4f4f;letter-spacing:-0.417px;left:1301.90px;">49,553</span>
<span class="t" style="top:362.00px;font-size:16px;line-height:20px;color:#4f4f4f;letter-spacing:-0.415px;left:284.40px;">1,548,629</span>
<span class="t" style="top:362.00px;font-size:16px;line-height:20px;color:#4f4f4f;letter-spacing:-0.415px;left:411.00px;">2,423,184</span>
<span class="t" style="top:362.00px;font-size:16px;line-height:20px;color:#4f4f4f;letter-spacing:-0.363px;left:577.80px;">1.56</span>
<span class="t" style="top:362.00px;font-size:16px;line-height:20px;color:#4f4f4f;letter-spacing:-0.241px;left:733.40px;">$13,832.76</span>
<span class="t" style="top:362.00px;font-size:16px;line-height:20px;color:#4f4f4f;letter-spacing:-0.421px;left:946.80px;">603</span>
<span class="t" style="top:362.00px;font-size:16px;line-height:20px;color:#4f4f4f;letter-spacing:-0.196px;left:1120.00px;">$22.94</span>
<span class="t" style="top:362.00px;font-size:16px;line-height:20px;color:#4f4f4f;letter-spacing:-0.417px;left:1301.90px;">62,442</span>
<span class="t" style="top:410.00px;font-size:16px;line-height:20px;color:#4f4f4f;letter-spacing:-0.415px;left:284.40px;">1,845,390</span>
<span class="t" style="top:410.00px;font-size:16px;line-height:20px;color:#4f4f4f;letter-spacing:-0.415px;left:411.00px;">2,524,818</span>
<span class="t" style="top:410.00px;font-size:16px;line-height:20px;color:#4f4f4f;letter-spacing:-0.363px;left:577.80px;">1.37</span>
<span class="t" style="top:410.00px;font-size:16px;line-height:20px;color:#4f4f4f;letter-spacing:-0.241px;left:733.40px;">$25,131.61</span>
<span class="t" style="top:410.00px;font-size:16px;line-height:20px;color:#4f4f4f;letter-spacing:-0.421px;left:946.80px;">587</span>
<span class="t" style="top:410.00px;font-size:16px;line-height:20px;color:#4f4f4f;letter-spacing:-0.196px;left:1120.00px;">$42.81</span>
<span class="t" style="top:410.00px;font-size:16px;line-height:20px;color:#4f4f4f;letter-spacing:-0.417px;left:1301.90px;">70,764</span>
<span class="t" style="top:458.00px;font-size:16px;line-height:20px;color:#4f4f4f;letter-spacing:-0.415px;left:284.40px;">1,289,562</span>
<span class="t" style="top:458.00px;font-size:16px;line-height:20px;color:#4f4f4f;letter-spacing:-0.415px;left:411.00px;">1,922,039</span>
<span class="t" style="top:458.00px;font-size:16px;line-height:20px;color:#4f4f4f;letter-spacing:-0.363px;left:577.80px;">1.49</span>
<span class="t" style="top:458.00px;font-size:16px;line-height:20px;color:#4f4f4f;letter-spacing:-0.241px;left:733.40px;">$15,140.45</span>
<span class="t" style="top:458.00px;font-size:16px;line-height:20px;color:#4f4f4f;letter-spacing:-0.421px;left:946.80px;">509</span>
<span class="t" style="top:458.00px;font-size:16px;line-height:20px;color:#4f4f4f;letter-spacing:-0.196px;left:1120.00px;">$29.75</span>
<span class="t" style="top:458.00px;font-size:16px;line-height:20px;color:#4f4f4f;letter-spacing:-0.417px;left:1301.90px;">35,398</span>
<span class="t" style="top:506.00px;font-size:16px;line-height:20px;color:#4f4f4f;letter-spacing:-0.415px;left:284.40px;">2,828,924</span>
<span class="t" style="top:506.00px;font-size:16px;line-height:20px;color:#4f4f4f;letter-spacing:-0.415px;left:411.00px;">4,359,921</span>
<span class="t" style="top:506.00px;font-size:16px;line-height:20px;color:#4f4f4f;letter-spacing:-0.363px;left:577.80px;">1.54</span>
<span class="t" style="top:506.00px;font-size:16px;line-height:20px;color:#4f4f4f;letter-spacing:-0.109px;left:733.40px;">$11,585.86</span>
<span class="t" style="top:506.00px;font-size:16px;line-height:20px;color:#4f4f4f;letter-spacing:-0.421px;left:946.80px;">375</span>
<span class="t" style="top:506.00px;font-size:16px;line-height:20px;color:#4f4f4f;letter-spacing:-0.196px;left:1120.00px;">$30.90</span>
<span class="t" style="top:506.00px;font-size:16px;line-height:20px;color:#4f4f4f;letter-spacing:-0.140px;left:1301.90px;">110,873</span>
<span class="t" style="top:553.00px;font-size:16px;line-height:20px;color:#4f4f4f;letter-spacing:-0.415px;left:284.40px;">2,590,909</span>
<span class="t" style="top:553.00px;font-size:16px;line-height:20px;color:#4f4f4f;letter-spacing:-0.415px;left:411.00px;">4,018,282</span>
<span class="t" style="top:553.00px;font-size:16px;line-height:20px;color:#4f4f4f;letter-spacing:-0.363px;left:577.80px;">1.55</span>
<span class="t" style="top:553.00px;font-size:16px;line-height:20px;color:#4f4f4f;letter-spacing:-0.241px;left:733.40px;">$15,892.63</span>
<span class="t" style="top:553.00px;font-size:16px;line-height:20px;color:#4f4f4f;letter-spacing:-0.421px;left:946.80px;">371</span>
<span class="t" style="top:553.00px;font-size:16px;line-height:20px;color:#4f4f4f;letter-spacing:-0.196px;left:1120.00px;">$42.84</span>
<span class="t" style="top:553.00px;font-size:16px;line-height:20px;color:#4f4f4f;letter-spacing:-0.338px;left:1301.90px;">124,315</span>
<span class="t" style="top:601.00px;font-size:16px;line-height:20px;color:#4f4f4f;letter-spacing:-0.415px;left:284.40px;">1,154,869</span>
<span class="t" style="top:601.00px;font-size:16px;line-height:20px;color:#4f4f4f;letter-spacing:-0.415px;left:411.00px;">2,472,221</span>
<span class="t" style="top:601.00px;font-size:16px;line-height:20px;color:#4f4f4f;letter-spacing:-0.363px;left:577.80px;">2.14</span>
<span class="t" style="top:601.00px;font-size:16px;line-height:20px;color:#4f4f4f;letter-spacing:-0.109px;left:733.40px;">$11,367.16</span>
<span class="t" style="top:601.00px;font-size:16px;line-height:20px;color:#4f4f4f;letter-spacing:-0.421px;left:946.80px;">356</span>
<span class="t" style="top:601.00px;font-size:16px;line-height:20px;color:#4f4f4f;letter-spacing:-0.196px;left:1120.00px;">$31.93</span>
<span class="t" style="top:601.00px;font-size:16px;line-height:20px;color:#4f4f4f;letter-spacing:-0.417px;left:1301.90px;">26,879</span>
<span class="t" style="top:649.00px;font-size:16px;line-height:20px;color:#4f4f4f;letter-spacing:-0.415px;left:284.40px;">1,224,885</span>
<span class="t" style="top:649.00px;font-size:16px;line-height:20px;color:#4f4f4f;letter-spacing:-0.415px;left:411.00px;">1,594,881</span>
<span class="t" style="top:649.00px;font-size:16px;line-height:20px;color:#4f4f4f;letter-spacing:-0.363px;left:577.80px;">1.30</span>
<span class="t" style="top:649.00px;font-size:16px;line-height:20px;color:#4f4f4f;letter-spacing:-0.278px;left:733.40px;">$7,285.86</span>
<span class="t" style="top:649.00px;font-size:16px;line-height:20px;color:#4f4f4f;letter-spacing:-0.421px;left:946.80px;">308</span>
<span class="t" style="top:649.00px;font-size:16px;line-height:20px;color:#4f4f4f;letter-spacing:-0.196px;left:1120.00px;">$23.66</span>
<span class="t" style="top:649.00px;font-size:16px;line-height:20px;color:#4f4f4f;letter-spacing:-0.417px;left:1301.90px;">45,600</span>
<span class="t" style="top:696.00px;font-size:16px;line-height:20px;color:#4f4f4f;letter-spacing:-0.415px;left:284.40px;">1,165,647</span>
<span class="t" style="top:696.00px;font-size:16px;line-height:20px;color:#4f4f4f;letter-spacing:-0.415px;left:411.00px;">1,659,376</span>
<span class="t" style="top:696.00px;font-size:16px;line-height:20px;color:#4f4f4f;letter-spacing:-0.363px;left:577.80px;">1.42</span>
<span class="t" style="top:696.00px;font-size:16px;line-height:20px;color:#4f4f4f;letter-spacing:-0.241px;left:733.40px;">$14,508.60</span>
<span class="t" style="top:696.00px;font-size:16px;line-height:20px;color:#4f4f4f;letter-spacing:-0.421px;left:946.80px;">248</span>
<span class="t" style="top:696.00px;font-size:16px;line-height:20px;color:#4f4f4f;letter-spacing:-0.196px;left:1120.00px;">$58.50</span>
<span class="t" style="top:696.00px;font-size:16px;line-height:20px;color:#4f4f4f;letter-spacing:-0.417px;left:1301.90px;">22,073</span>
<span class="t" style="top:744.00px;font-size:16px;line-height:20px;color:#4f4f4f;letter-spacing:-0.338px;left:284.40px;">842,477</span>
<span class="t" style="top:744.00px;font-size:16px;line-height:20px;color:#4f4f4f;letter-spacing:-0.415px;left:411.00px;">1,676,401</span>
<span class="t" style="top:744.00px;font-size:16px;line-height:20px;color:#4f4f4f;letter-spacing:-0.363px;left:577.80px;">1.99</span>
<span class="t" style="top:744.00px;font-size:16px;line-height:20px;color:#4f4f4f;letter-spacing:-0.278px;left:733.40px;">$7,357.21</span>
<span class="t" style="top:744.00px;font-size:16px;line-height:20px;color:#4f4f4f;letter-spacing:-0.421px;left:946.80px;">247</span>
<div class="a" style="left:946.20px;top:760.15px;width:26.85px;border-top:1.3px dotted #5a5a5a;"></div>
<span class="t" style="top:746.00px;font-size:10px;line-height:20px;color:#84878c;letter-spacing:0.041px;left:983.05px;">[2]</span>
<span class="t" style="top:744.00px;font-size:16px;line-height:20px;color:#4f4f4f;letter-spacing:-0.196px;left:1120.00px;">$29.79</span>
<div class="a" style="left:1119.40px;top:760.15px;width:48.95px;border-top:1.3px dotted #5a5a5a;"></div>
<span class="t" style="top:746.00px;font-size:10px;line-height:20px;color:#84878c;letter-spacing:0.041px;left:1178.35px;">[2]</span>
<span class="t" style="top:744.00px;font-size:16px;line-height:20px;color:#4f4f4f;letter-spacing:-0.417px;left:1301.90px;">18,441</span>
<span class="t" style="top:792.00px;font-size:16px;line-height:20px;color:#4f4f4f;letter-spacing:-0.415px;left:284.40px;">1,254,962</span>
<span class="t" style="top:792.00px;font-size:16px;line-height:20px;color:#4f4f4f;letter-spacing:-0.415px;left:411.00px;">1,734,895</span>
<span class="t" style="top:792.00px;font-size:16px;line-height:20px;color:#4f4f4f;letter-spacing:-0.363px;left:577.80px;">1.38</span>
<span class="t" style="top:792.00px;font-size:16px;line-height:20px;color:#4f4f4f;letter-spacing:-0.278px;left:733.40px;">$6,848.90</span>
<span class="t" style="top:792.00px;font-size:16px;line-height:20px;color:#4f4f4f;letter-spacing:-0.421px;left:946.80px;">230</span>
<div class="a" style="left:946.20px;top:807.87px;width:26.85px;border-top:1.3px dotted #5a5a5a;"></div>
<span class="t" style="top:794.00px;font-size:10px;line-height:20px;color:#84878c;letter-spacing:0.041px;left:983.05px;">[2]</span>
<span class="t" style="top:792.00px;font-size:16px;line-height:20px;color:#4f4f4f;letter-spacing:-0.196px;left:1120.00px;">$29.78</span>
<div class="a" style="left:1119.40px;top:807.87px;width:48.95px;border-top:1.3px dotted #5a5a5a;"></div>
<span class="t" style="top:794.00px;font-size:10px;line-height:20px;color:#84878c;letter-spacing:0.041px;left:1178.35px;">[2]</span>
<span class="t" style="top:792.00px;font-size:16px;line-height:20px;color:#4f4f4f;letter-spacing:-0.417px;left:1301.90px;">19,879</span>
<span class="t" style="top:840.00px;font-size:16px;line-height:20px;color:#4f4f4f;letter-spacing:-0.338px;left:284.40px;">772,634</span>
<span class="t" style="top:840.00px;font-size:16px;line-height:20px;color:#4f4f4f;letter-spacing:-0.415px;left:411.00px;">1,584,521</span>
<span class="t" style="top:840.00px;font-size:16px;line-height:20px;color:#4f4f4f;letter-spacing:-0.363px;left:577.80px;">2.05</span>
<span class="t" style="top:840.00px;font-size:16px;line-height:20px;color:#4f4f4f;letter-spacing:-0.278px;left:733.40px;">$8,420.31</span>
<span class="t" style="top:840.00px;font-size:16px;line-height:20px;color:#4f4f4f;letter-spacing:-0.421px;left:946.80px;">216</span>
<div class="a" style="left:946.20px;top:855.59px;width:26.85px;border-top:1.3px dotted #5a5a5a;"></div>
<span class="t" style="top:841.00px;font-size:10px;line-height:20px;color:#84878c;letter-spacing:0.041px;left:983.05px;">[2]</span>
<span class="t" style="top:840.00px;font-size:16px;line-height:20px;color:#4f4f4f;letter-spacing:-0.196px;left:1120.00px;">$38.98</span>
<div class="a" style="left:1119.40px;top:855.59px;width:48.95px;border-top:1.3px dotted #5a5a5a;"></div>
<span class="t" style="top:841.00px;font-size:10px;line-height:20px;color:#84878c;letter-spacing:0.041px;left:1178.35px;">[2]</span>
<span class="t" style="top:840.00px;font-size:16px;line-height:20px;color:#4f4f4f;letter-spacing:-0.417px;left:1301.90px;">17,228</span>
<span class="t" style="top:887.00px;font-size:16px;line-height:20px;color:#4f4f4f;letter-spacing:-0.338px;left:284.40px;">458,724</span>
<span class="t" style="top:887.00px;font-size:16px;line-height:20px;color:#4f4f4f;letter-spacing:-0.338px;left:411.00px;">590,370</span>
<span class="t" style="top:887.00px;font-size:16px;line-height:20px;color:#4f4f4f;letter-spacing:-0.363px;left:577.80px;">1.29</span>
<span class="t" style="top:887.00px;font-size:16px;line-height:20px;color:#4f4f4f;letter-spacing:-0.278px;left:733.40px;">$6,242.52</span>
<span class="t" style="top:887.00px;font-size:16px;line-height:20px;color:#4f4f4f;letter-spacing:-0.421px;left:946.80px;">207</span>
<span class="t" style="top:887.00px;font-size:16px;line-height:20px;color:#4f4f4f;letter-spacing:-0.196px;left:1120.00px;">$30.16</span>
<span class="t" style="top:887.00px;font-size:16px;line-height:20px;color:#4f4f4f;letter-spacing:-0.417px;left:1301.90px;">24,241</span>
<span class="t" style="top:935.00px;font-size:16px;line-height:20px;color:#4f4f4f;letter-spacing:-0.338px;left:284.40px;">879,230</span>
<span class="t" style="top:935.00px;font-size:16px;line-height:20px;color:#4f4f4f;letter-spacing:-0.415px;left:411.00px;">1,090,356</span>
<span class="t" style="top:935.00px;font-size:16px;line-height:20px;color:#4f4f4f;letter-spacing:-0.363px;left:577.80px;">1.24</span>
<span class="t" style="top:935.00px;font-size:16px;line-height:20px;color:#4f4f4f;letter-spacing:-0.278px;left:733.40px;">$7,436.41</span>
<span class="t" style="top:935.00px;font-size:16px;line-height:20px;color:#4f4f4f;letter-spacing:-0.421px;left:946.80px;">176</span>
<span class="t" style="top:935.00px;font-size:16px;line-height:20px;color:#4f4f4f;letter-spacing:-0.196px;left:1120.00px;">$42.25</span>
<span class="t" style="top:935.00px;font-size:16px;line-height:20px;color:#4f4f4f;letter-spacing:-0.417px;left:1301.90px;">12,158</span>
<span class="t" style="top:983.00px;font-size:16px;line-height:20px;color:#4f4f4f;letter-spacing:-0.415px;left:284.40px;">1,700,400</span>
<span class="t" style="top:983.00px;font-size:16px;line-height:20px;color:#4f4f4f;letter-spacing:-0.415px;left:411.00px;">2,170,257</span>
<span class="t" style="top:983.00px;font-size:16px;line-height:20px;color:#4f4f4f;letter-spacing:-0.363px;left:577.80px;">1.27</span>
<span class="t" style="top:983.00px;font-size:16px;line-height:20px;color:#4f4f4f;letter-spacing:-0.278px;left:733.40px;">$9,401.26</span>
<span class="t" style="top:983.00px;font-size:16px;line-height:20px;color:#4f4f4f;letter-spacing:-0.421px;left:946.80px;">159</span>
<span class="t" style="top:983.00px;font-size:16px;line-height:20px;color:#4f4f4f;letter-spacing:-0.196px;left:1120.00px;">$59.06</span>
<span class="t" style="top:983.00px;font-size:16px;line-height:20px;color:#4f4f4f;letter-spacing:-0.417px;left:1301.90px;">64,404</span>
<svg class="a" style="left:94px;top:259px;shape-rendering:crispEdges;" width="164" height="740" viewBox="0 0 164 740"><g transform="translate(0.20 0.00)"><rect x="0" y="0" width="163.8" height="5" fill="#fafafa"/><rect x="0" y="29.00" width="163.8" height="12" fill="#fdfdfd"/><rect x="0" y="41.00" width="163.8" height="12" fill="#fafafa"/><rect x="0" y="77.00" width="163.8" height="12" fill="#fefefe"/><rect x="0" y="89.00" width="163.8" height="12" fill="#fbfbfb"/><rect x="0" y="125.00" width="163.8" height="12" fill="#fdfdfd"/><rect x="0" y="137.00" width="163.8" height="12" fill="#fcfcfc"/><rect x="0" y="173.00" width="163.8" height="12" fill="#fcfcfc"/><rect x="0" y="185.00" width="163.8" height="12" fill="#fdfdfd"/><rect x="0" y="221.00" width="163.8" height="12" fill="#fbfbfb"/><rect x="0" y="233.00" width="163.8" height="12" fill="#fefefe"/><rect x="0" y="269.00" width="163.8" height="12" fill="#fafafa"/><rect x="0" y="317.00" width="163.8" height="12" fill="#fafafa"/><rect x="0" y="365.00" width="163.8" height="12" fill="#fafafa"/><rect x="0" y="413.00" width="163.8" height="12" fill="#fafafa"/><rect x="0" y="461.00" width="163.8" height="12" fill="#fafafa"/><rect x="0" y="509.00" width="163.8" height="12" fill="#fafafa"/><rect x="0" y="557.00" width="163.8" height="12" fill="#fafafa"/><rect x="0" y="605.00" width="163.8" height="12" fill="#fafafa"/><rect x="0" y="653.00" width="163.8" height="12" fill="#fafafa"/><rect x="0" y="701.00" width="163.8" height="12" fill="#fafafa"/><rect x="0" y="749.00" width="163.8" height="12" fill="#fafafa"/><rect x="1.8" y="5.00" width="12" height="12" fill="#eff4fc"/><rect x="13.8" y="5.00" width="12" height="12" fill="#e1eaf8"/><rect x="25.8" y="5.00" width="12" height="12" fill="#e1eaf8"/><rect x="37.8" y="5.00" width="12" height="12" fill="#e1eaf8"/><rect x="49.8" y="5.00" width="12" height="12" fill="#e1eaf8"/><rect x="61.8" y="5.00" width="12" height="12" fill="#d9e5f6"/><rect x="73.8" y="5.00" width="12" height="12" fill="#eff4fc"/><rect x="85.8" y="5.00" width="12" height="12" fill="#e8eefa"/><rect x="97.8" y="5.00" width="12" height="12" fill="#d9e5f6"/><rect x="109.8" y="5.00" width="12" height="12" fill="#e1eaf8"/><rect x="121.8" y="5.00" width="12" height="12" fill="#d9e5f6"/><rect x="133.8" y="5.00" width="12" height="12" fill="#e8eefa"/><rect x="145.8" y="5.00" width="12" height="12" fill="#e1eaf8"/><rect x="1.8" y="17.00" width="12" height="12" fill="#eff4fc"/><rect x="13.8" y="17.00" width="12" height="12" fill="#e1eaf8"/><rect x="25.8" y="17.00" width="12" height="12" fill="#e1eaf8"/><rect x="37.8" y="17.00" width="12" height="12" fill="#d0dff5"/><rect x="49.8" y="17.00" width="12" height="12" fill="#d9e5f6"/><rect x="61.8" y="17.00" width="12" height="12" fill="#d9e5f6"/><rect x="73.8" y="17.00" width="12" height="12" fill="#e8eefa"/><rect x="85.8" y="17.00" width="12" height="12" fill="#e1eaf8"/><rect x="97.8" y="17.00" width="12" height="12" fill="#d9e5f6"/><rect x="109.8" y="17.00" width="12" height="12" fill="#d9e5f6"/><rect x="121.8" y="17.00" width="12" height="12" fill="#e1eaf8"/><rect x="133.8" y="17.00" width="12" height="12" fill="#eff4fc"/><rect x="145.8" y="17.00" width="12" height="12" fill="#d9e5f6"/><rect x="1.8" y="53.00" width="12" height="12" fill="#eff4fc"/><rect x="13.8" y="53.00" width="12" height="12" fill="#d9e5f6"/><rect x="25.8" y="53.00" width="12" height="12" fill="#eff4fc"/><rect x="37.8" y="53.00" width="12" height="12" fill="#e8eefa"/><rect x="49.8" y="53.00" width="12" height="12" fill="#e8eefa"/><rect x="61.8" y="53.00" width="12" height="12" fill="#e8eefa"/><rect x="73.8" y="53.00" width="12" height="12" fill="#e8eefa"/><rect x="85.8" y="53.00" width="12" height="12" fill="#d9e5f6"/><rect x="97.8" y="53.00" width="12" height="12" fill="#eff4fc"/><rect x="1.8" y="65.00" width="12" height="12" fill="#eff4fc"/><rect x="13.8" y="65.00" width="12" height="12" fill="#e8eefa"/><rect x="25.8" y="65.00" width="12" height="12" fill="#d0dff5"/><rect x="37.8" y="65.00" width="12" height="12" fill="#e1eaf8"/><rect x="49.8" y="65.00" width="12" height="12" fill="#d0dff5"/><rect x="61.8" y="65.00" width="12" height="12" fill="#e1eaf8"/><rect x="73.8" y="65.00" width="12" height="12" fill="#e8eefa"/><rect x="85.8" y="65.00" width="12" height="12" fill="#d9e5f6"/><rect x="97.8" y="65.00" width="12" height="12" fill="#eff4fc"/><rect x="1.8" y="101.00" width="12" height="12" fill="#eff4fc"/><rect x="13.8" y="101.00" width="12" height="12" fill="#d9e5f6"/><rect x="25.8" y="101.00" width="12" height="12" fill="#eff4fc"/><rect x="37.8" y="101.00" width="12" height="12" fill="#e1eaf8"/><rect x="49.8" y="101.00" width="12" height="12" fill="#e8eefa"/><rect x="61.8" y="101.00" width="12" height="12" fill="#e8eefa"/><rect x="73.8" y="101.00" width="12" height="12" fill="#eff4fc"/><rect x="85.8" y="101.00" width="12" height="12" fill="#d9e5f6"/><rect x="97.8" y="101.00" width="12" height="12" fill="#eff4fc"/><rect x="1.8" y="113.00" width="12" height="12" fill="#eff4fc"/><rect x="13.8" y="113.00" width="12" height="12" fill="#e8eefa"/><rect x="25.8" y="113.00" width="12" height="12" fill="#d0dff5"/><rect x="37.8" y="113.00" width="12" height="12" fill="#e1eaf8"/><rect x="49.8" y="113.00" width="12" height="12" fill="#d0dff5"/><rect x="61.8" y="113.00" width="12" height="12" fill="#e1eaf8"/><rect x="73.8" y="113.00" width="12" height="12" fill="#e8eefa"/><rect x="85.8" y="113.00" width="12" height="12" fill="#d9e5f6"/><rect x="97.8" y="113.00" width="12" height="12" fill="#eff4fc"/><rect x="1.8" y="149.00" width="12" height="12" fill="#eff4fc"/><rect x="13.8" y="149.00" width="12" height="12" fill="#e1eaf8"/><rect x="25.8" y="149.00" width="12" height="12" fill="#e8eefa"/><rect x="37.8" y="149.00" width="12" height="12" fill="#e8eefa"/><rect x="49.8" y="149.00" width="12" height="12" fill="#d0dff5"/><rect x="1.8" y="161.00" width="12" height="12" fill="#f8fafe"/><rect x="13.8" y="161.00" width="12" height="12" fill="#d9e5f6"/><rect x="25.8" y="161.00" width="12" height="12" fill="#d9e5f6"/><rect x="37.8" y="161.00" width="12" height="12" fill="#eff4fc"/><rect x="49.8" y="161.00" width="12" height="12" fill="#e1eaf8"/><rect x="1.8" y="197.00" width="12" height="12" fill="#e8eefa"/><rect x="13.8" y="197.00" width="12" height="12" fill="#d9e5f6"/><rect x="25.8" y="197.00" width="12" height="12" fill="#e8eefa"/><rect x="37.8" y="197.00" width="12" height="12" fill="#eff4fc"/><rect x="49.8" y="197.00" width="12" height="12" fill="#d9e5f6"/><rect x="61.8" y="197.00" width="12" height="12" fill="#e8eefa"/><rect x="73.8" y="197.00" width="12" height="12" fill="#d0dff5"/><rect x="85.8" y="197.00" width="12" height="12" fill="#eff4fc"/><rect x="1.8" y="209.00" width="12" height="12" fill="#eff4fc"/><rect x="13.8" y="209.00" width="12" height="12" fill="#d9e5f6"/><rect x="25.8" y="209.00" width="12" height="12" fill="#e1eaf8"/><rect x="37.8" y="209.00" width="12" height="12" fill="#d9e5f6"/><rect x="49.8" y="209.00" width="12" height="12" fill="#d9e5f6"/><rect x="61.8" y="209.00" width="12" height="12" fill="#e8eefa"/><rect x="73.8" y="209.00" width="12" height="12" fill="#e1eaf8"/><rect x="85.8" y="209.00" width="12" height="12" fill="#eff4fc"/><rect x="1.8" y="245.00" width="12" height="12" fill="#e8eefa"/><rect x="13.8" y="245.00" width="12" height="12" fill="#d9e5f6"/><rect x="25.8" y="245.00" width="12" height="12" fill="#e1eaf8"/><rect x="37.8" y="245.00" width="12" height="12" fill="#d9e5f6"/><rect x="49.8" y="245.00" width="12" height="12" fill="#e8eefa"/><rect x="61.8" y="245.00" width="12" height="12" fill="#e1eaf8"/><rect x="73.8" y="245.00" width="12" height="12" fill="#e1eaf8"/><rect x="85.8" y="245.00" width="12" height="12" fill="#d9e5f6"/><rect x="1.8" y="257.00" width="12" height="12" fill="#eff4fc"/><rect x="13.8" y="257.00" width="12" height="12" fill="#eff4fc"/><rect x="25.8" y="257.00" width="12" height="12" fill="#d9e5f6"/><rect x="37.8" y="257.00" width="12" height="12" fill="#e1eaf8"/><rect x="49.8" y="257.00" width="12" height="12" fill="#d9e5f6"/><rect x="61.8" y="257.00" width="12" height="12" fill="#e8eefa"/><rect x="73.8" y="257.00" width="12" height="12" fill="#e8eefa"/><rect x="85.8" y="257.00" width="12" height="12" fill="#eff4fc"/><rect x="1.8" y="293.00" width="12" height="12" fill="#e8eefa"/><rect x="13.8" y="293.00" width="12" height="12" fill="#d9e5f6"/><rect x="25.8" y="293.00" width="12" height="12" fill="#e1eaf8"/><rect x="37.8" y="293.00" width="12" height="12" fill="#d9e5f6"/><rect x="49.8" y="293.00" width="12" height="12" fill="#e8eefa"/><rect x="61.8" y="293.00" width="12" height="12" fill="#e1eaf8"/><rect x="73.8" y="293.00" width="12" height="12" fill="#e8eefa"/><rect x="85.8" y="293.00" width="12" height="12" fill="#e1eaf8"/><rect x="1.8" y="305.00" width="12" height="12" fill="#eff4fc"/><rect x="13.8" y="305.00" width="12" height="12" fill="#eff4fc"/><rect x="25.8" y="305.00" width="12" height="12" fill="#d9e5f6"/><rect x="37.8" y="305.00" width="12" height="12" fill="#d9e5f6"/><rect x="49.8" y="305.00" width="12" height="12" fill="#d9e5f6"/><rect x="61.8" y="305.00" width="12" height="12" fill="#e8eefa"/><rect x="73.8" y="305.00" width="12" height="12" fill="#eff4fc"/><rect x="85.8" y="305.00" width="12" height="12" fill="#e8eefa"/><rect x="1.8" y="341.00" width="12" height="12" fill="#e8eefa"/><rect x="13.8" y="341.00" width="12" height="12" fill="#e1eaf8"/><rect x="25.8" y="341.00" width="12" height="12" fill="#e1eaf8"/><rect x="37.8" y="341.00" width="12" height="12" fill="#e1eaf8"/><rect x="49.8" y="341.00" width="12" height="12" fill="#e1eaf8"/><rect x="61.8" y="341.00" width="12" height="12" fill="#d9e5f6"/><rect x="73.8" y="341.00" width="12" height="12" fill="#e8eefa"/><rect x="1.8" y="353.00" width="12" height="12" fill="#eff4fc"/><rect x="13.8" y="353.00" width="12" height="12" fill="#e1eaf8"/><rect x="25.8" y="353.00" width="12" height="12" fill="#e1eaf8"/><rect x="37.8" y="353.00" width="12" height="12" fill="#e1eaf8"/><rect x="49.8" y="353.00" width="12" height="12" fill="#e8eefa"/><rect x="61.8" y="353.00" width="12" height="12" fill="#e8eefa"/><rect x="73.8" y="353.00" width="12" height="12" fill="#eff4fc"/><rect x="1.8" y="389.00" width="12" height="12" fill="#e1eaf8"/><rect x="13.8" y="389.00" width="12" height="12" fill="#d0dff5"/><rect x="25.8" y="389.00" width="12" height="12" fill="#c6d8f2"/><rect x="37.8" y="389.00" width="12" height="12" fill="#d0dff5"/><rect x="49.8" y="389.00" width="12" height="12" fill="#e8eefa"/><rect x="61.8" y="389.00" width="12" height="12" fill="#c6d8f2"/><rect x="73.8" y="389.00" width="12" height="12" fill="#d9e5f6"/><rect x="85.8" y="389.00" width="12" height="12" fill="#d0dff5"/><rect x="1.8" y="401.00" width="12" height="12" fill="#eff4fc"/><rect x="13.8" y="401.00" width="12" height="12" fill="#eff4fc"/><rect x="25.8" y="401.00" width="12" height="12" fill="#e8eefa"/><rect x="37.8" y="401.00" width="12" height="12" fill="#e8eefa"/><rect x="49.8" y="401.00" width="12" height="12" fill="#e1eaf8"/><rect x="61.8" y="401.00" width="12" height="12" fill="#e8eefa"/><rect x="73.8" y="401.00" width="12" height="12" fill="#eff4fc"/><rect x="85.8" y="401.00" width="12" height="12" fill="#e8eefa"/><rect x="1.8" y="437.00" width="12" height="12" fill="#e8eefa"/><rect x="13.8" y="437.00" width="12" height="12" fill="#d0dff5"/><rect x="25.8" y="437.00" width="12" height="12" fill="#d9e5f6"/><rect x="37.8" y="437.00" width="12" height="12" fill="#e1eaf8"/><rect x="49.8" y="437.00" width="12" height="12" fill="#c6d8f2"/><rect x="1.8" y="449.00" width="12" height="12" fill="#f8fafe"/><rect x="13.8" y="449.00" width="12" height="12" fill="#e1eaf8"/><rect x="25.8" y="449.00" width="12" height="12" fill="#e1eaf8"/><rect x="37.8" y="449.00" width="12" height="12" fill="#eff4fc"/><rect x="49.8" y="449.00" width="12" height="12" fill="#e1eaf8"/><rect x="1.8" y="485.00" width="12" height="12" fill="#e8eefa"/><rect x="13.8" y="485.00" width="12" height="12" fill="#e1eaf8"/><rect x="25.8" y="485.00" width="12" height="12" fill="#d9e5f6"/><rect x="37.8" y="485.00" width="12" height="12" fill="#e1eaf8"/><rect x="49.8" y="485.00" width="12" height="12" fill="#e1eaf8"/><rect x="61.8" y="485.00" width="12" height="12" fill="#d9e5f6"/><rect x="73.8" y="485.00" width="12" height="12" fill="#e1eaf8"/><rect x="1.8" y="497.00" width="12" height="12" fill="#eff4fc"/><rect x="13.8" y="497.00" width="12" height="12" fill="#e8eefa"/><rect x="25.8" y="497.00" width="12" height="12" fill="#e8eefa"/><rect x="37.8" y="497.00" width="12" height="12" fill="#e8eefa"/><rect x="49.8" y="497.00" width="12" height="12" fill="#eff4fc"/><rect x="61.8" y="497.00" width="12" height="12" fill="#eff4fc"/><rect x="73.8" y="497.00" width="12" height="12" fill="#e8eefa"/><rect x="1.8" y="533.00" width="12" height="12" fill="#e8eefa"/><rect x="13.8" y="533.00" width="12" height="12" fill="#d9e5f6"/><rect x="25.8" y="533.00" width="12" height="12" fill="#d0dff5"/><rect x="37.8" y="533.00" width="12" height="12" fill="#c6d8f2"/><rect x="49.8" y="533.00" width="12" height="12" fill="#d0dff5"/><rect x="61.8" y="533.00" width="12" height="12" fill="#c6d8f2"/><rect x="73.8" y="533.00" width="12" height="12" fill="#eff4fc"/><rect x="85.8" y="533.00" width="12" height="12" fill="#d9e5f6"/><rect x="97.8" y="533.00" width="12" height="12" fill="#c6d8f2"/><rect x="109.8" y="533.00" width="12" height="12" fill="#d0dff5"/><rect x="121.8" y="533.00" width="12" height="12" fill="#c6d8f2"/><rect x="133.8" y="533.00" width="12" height="12" fill="#e8eefa"/><rect x="145.8" y="533.00" width="12" height="12" fill="#c6d8f2"/><rect x="1.8" y="545.00" width="12" height="12" fill="#f8fafe"/><rect x="13.8" y="545.00" width="12" height="12" fill="#e8eefa"/><rect x="25.8" y="545.00" width="12" height="12" fill="#eff4fc"/><rect x="37.8" y="545.00" width="12" height="12" fill="#e8eefa"/><rect x="49.8" y="545.00" width="12" height="12" fill="#e8eefa"/><rect x="61.8" y="545.00" width="12" height="12" fill="#e1eaf8"/><rect x="73.8" y="545.00" width="12" height="12" fill="#e8eefa"/><rect x="85.8" y="545.00" width="12" height="12" fill="#e8eefa"/><rect x="97.8" y="545.00" width="12" height="12" fill="#e8eefa"/><rect x="109.8" y="545.00" width="12" height="12" fill="#e8eefa"/><rect x="121.8" y="545.00" width="12" height="12" fill="#eff4fc"/><rect x="133.8" y="545.00" width="12" height="12" fill="#eff4fc"/><rect x="145.8" y="545.00" width="12" height="12" fill="#e8eefa"/><rect x="1.8" y="581.00" width="12" height="12" fill="#e8eefa"/><rect x="13.8" y="581.00" width="12" height="12" fill="#d9e5f6"/><rect x="25.8" y="581.00" width="12" height="12" fill="#d0dff5"/><rect x="37.8" y="581.00" width="12" height="12" fill="#e8eefa"/><rect x="49.8" y="581.00" width="12" height="12" fill="#d9e5f6"/><rect x="61.8" y="581.00" width="12" height="12" fill="#e8eefa"/><rect x="1.8" y="593.00" width="12" height="12" fill="#f8fafe"/><rect x="13.8" y="593.00" width="12" height="12" fill="#e8eefa"/><rect x="25.8" y="593.00" width="12" height="12" fill="#eff4fc"/><rect x="37.8" y="593.00" width="12" height="12" fill="#eff4fc"/><rect x="49.8" y="593.00" width="12" height="12" fill="#eff4fc"/><rect x="61.8" y="593.00" width="12" height="12" fill="#f8fafe"/><rect x="1.8" y="629.00" width="12" height="12" fill="#e1eaf8"/><rect x="13.8" y="629.00" width="12" height="12" fill="#d0dff5"/><rect x="25.8" y="629.00" width="12" height="12" fill="#d9e5f6"/><rect x="37.8" y="629.00" width="12" height="12" fill="#e1eaf8"/><rect x="49.8" y="629.00" width="12" height="12" fill="#d0dff5"/><rect x="61.8" y="629.00" width="12" height="12" fill="#e1eaf8"/><rect x="73.8" y="629.00" width="12" height="12" fill="#d0dff5"/><rect x="85.8" y="629.00" width="12" height="12" fill="#eff4fc"/><rect x="1.8" y="641.00" width="12" height="12" fill="#f8fafe"/><rect x="13.8" y="641.00" width="12" height="12" fill="#e8eefa"/><rect x="25.8" y="641.00" width="12" height="12" fill="#eff4fc"/><rect x="37.8" y="641.00" width="12" height="12" fill="#e1eaf8"/><rect x="49.8" y="641.00" width="12" height="12" fill="#e8eefa"/><rect x="61.8" y="641.00" width="12" height="12" fill="#eff4fc"/><rect x="73.8" y="641.00" width="12" height="12" fill="#e8eefa"/><rect x="85.8" y="641.00" width="12" height="12" fill="#f8fafe"/><rect x="1.8" y="677.00" width="12" height="12" fill="#e1eaf8"/><rect x="13.8" y="677.00" width="12" height="12" fill="#d0dff5"/><rect x="25.8" y="677.00" width="12" height="12" fill="#d0dff5"/><rect x="37.8" y="677.00" width="12" height="12" fill="#d0dff5"/><rect x="49.8" y="677.00" width="12" height="12" fill="#d9e5f6"/><rect x="61.8" y="677.00" width="12" height="12" fill="#d9e5f6"/><rect x="73.8" y="677.00" width="12" height="12" fill="#d9e5f6"/><rect x="85.8" y="677.00" width="12" height="12" fill="#d9e5f6"/><rect x="1.8" y="689.00" width="12" height="12" fill="#f8fafe"/><rect x="13.8" y="689.00" width="12" height="12" fill="#f8fafe"/><rect x="25.8" y="689.00" width="12" height="12" fill="#e8eefa"/><rect x="37.8" y="689.00" width="12" height="12" fill="#e8eefa"/><rect x="49.8" y="689.00" width="12" height="12" fill="#e8eefa"/><rect x="61.8" y="689.00" width="12" height="12" fill="#eff4fc"/><rect x="73.8" y="689.00" width="12" height="12" fill="#eff4fc"/><rect x="85.8" y="689.00" width="12" height="12" fill="#eff4fc"/></g></svg>
</div></div>
<div class="a" style="left:89.7px;top:984.80px;width:1739.4px;height:5.8px;background:linear-gradient(to bottom, rgba(0,0,0,0) 0%, rgba(0,0,0,0.025) 40%, rgba(0,0,0,0.07) 75%, rgba(0,0,0,0.16) 100%);"></div>
<svg class="a" style="left:94px;top:984px;shape-rendering:crispEdges;" width="164" height="6" viewBox="0 0 164 6"><g transform="translate(0.20 0.00)"><rect x="0" y="0" width="163.8" height="5.9" fill="#f6f6f6"/><rect x="1.8" y="0" width="12" height="5.9" fill="#dfe6f5"/><rect x="13.8" y="0" width="12" height="5.9" fill="#e1e7f5"/><rect x="25.8" y="0" width="12" height="5.9" fill="#eceef6"/><rect x="37.8" y="0" width="12" height="5.9" fill="#f3f3f4"/><rect x="49.8" y="0" width="12" height="5.9" fill="#c7d6ee"/><rect x="61.8" y="0" width="12" height="5.9" fill="#dfe5f4"/><rect x="9.8" y="4.9" width="4.0" height="1" fill="#3a6bcf" opacity="0.68"/><rect x="17.8" y="4.9" width="4.0" height="1" fill="#3a6bcf" opacity="0.68"/><rect x="25.8" y="4.9" width="2.5" height="1" fill="#3a6bcf" opacity="0.38"/><rect x="31.8" y="4.9" width="4.0" height="1" fill="#3a6bcf" opacity="0.60"/><rect x="39.8" y="4.9" width="3.0" height="1" fill="#3a6bcf" opacity="0.38"/><rect x="49.8" y="4.9" width="2.0" height="1" fill="#3a6bcf" opacity="0.60"/><rect x="54.8" y="4.9" width="2.0" height="1" fill="#3a6bcf" opacity="0.68"/><rect x="59.8" y="4.9" width="2.0" height="1" fill="#3a6bcf" opacity="0.60"/></g></svg>
<svg class="a" style="left:89px;top:990px;" width="1741" height="61" viewBox="0 0 1741 61"><g transform="translate(0.70 0.60)"><path d="M306.35 0 V55.90" stroke="#dcdfe2" stroke-width="1.35"/><path d="M473.40 0 V55.90" stroke="#dcdfe2" stroke-width="1.35"/><path d="M628.90 0 V55.90" stroke="#dcdfe2" stroke-width="1.35"/><path d="M842.90 0 V55.90" stroke="#dcdfe2" stroke-width="1.35"/><path d="M1015.80 0 V55.90" stroke="#dcdfe2" stroke-width="1.35"/><path d="M1197.70 0 V55.90" stroke="#dcdfe2" stroke-width="1.35"/><path d="M1320.00 0 V55.90" stroke="#dcdfe2" stroke-width="1.35"/><path d="M180.70 0 V55.90" stroke="#dcdfe2" stroke-width="1.35"/></g></svg>
<div class="a" style="left:0;top:0;width:1920px;height:1080px;will-change:transform;">
<span class="t" style="top:1000.00px;font-size:16px;line-height:20px;color:#1c1e21;font-weight:700;letter-spacing:-0.578px;left:104.00px;">Total results</span>
<div class="a" style="left:104px;top:1018px;width:153px;height:26px;overflow:hidden;">
<span class="t" style="left:0;top:2.36px;font-size:13.4px;line-height:20px;color:#8d949e;letter-spacing:-0.05px;">50 rows displayed (more rows)</span>
</div>
<span class="t" style="top:1000.00px;font-size:16px;line-height:20px;color:#1c1e21;font-weight:700;letter-spacing:0.014px;right:1533.49px;">37,616,656</span>
<span class="t" style="top:1021.00px;font-size:13.5px;line-height:20px;color:#6b727c;letter-spacing:-0.300px;right:1533.80px;">Accounts Cente…</span>
<span class="t" style="top:1000.00px;font-size:16px;line-height:20px;color:#1c1e21;font-weight:700;letter-spacing:0.014px;right:1366.49px;">92,241,426</span>
<span class="t" style="top:1021.00px;font-size:13.5px;line-height:20px;color:#6b727c;letter-spacing:0.321px;right:1366.18px;">Total</span>
<span class="t" style="top:1000.00px;font-size:16px;line-height:20px;color:#1c1e21;font-weight:700;letter-spacing:-0.062px;right:1211.16px;">2.45</span>
<span class="t" style="top:1021.00px;font-size:13.5px;line-height:20px;color:#6b727c;letter-spacing:-0.227px;right:1211.33px;">Per Accounts Center…</span>
<span class="t" style="top:1000.00px;font-size:16px;line-height:20px;color:#1c1e21;font-weight:700;letter-spacing:0.088px;right:997.51px;">$647,791.51</span>
<span class="t" style="top:1021.00px;font-size:13.5px;line-height:20px;color:#6b727c;letter-spacing:0.171px;right:997.43px;">Total spent</span>
<span class="t" style="top:1000.00px;font-size:16px;line-height:20px;color:#1c1e21;font-weight:700;letter-spacing:-0.109px;right:824.31px;">9,727</span>
<span class="t" style="top:1021.00px;font-size:13.5px;line-height:20px;color:#6b727c;letter-spacing:0.321px;right:823.88px;">Total</span>
<span class="t" style="top:1000.00px;font-size:16px;line-height:20px;color:#1c1e21;font-weight:700;letter-spacing:0.064px;right:642.84px;">$66.60</span>
<span class="t" style="top:1021.00px;font-size:13.5px;line-height:20px;color:#6b727c;letter-spacing:0.119px;right:642.78px;">Per Action</span>
<span class="t" style="top:1000.00px;font-size:16px;line-height:20px;color:#1c1e21;font-weight:700;letter-spacing:-0.015px;right:519.82px;">2,061,859</span>
<span class="t" style="top:1021.00px;font-size:13.5px;line-height:20px;color:#6b727c;letter-spacing:0.321px;right:519.48px;">Total</span>
</div>
<div class="a" style="left:1816.60px;top:258.00px;width:8.00px;height:217.50px;background:#bebebe;border-radius:4px;"></div>
<div class="a" style="left:1847.20px;top:70.70px;width:100.00px;height:982.80px;background:#fff;border-radius:9px;box-shadow:0 0 4.5px rgba(0,0,0,0.13),0 0 1px rgba(0,0,0,0.05);"></div>
<span class="t" style="top:90.00px;font-size:17.5px;line-height:20px;color:#1c1e21;font-weight:700;left:1861.50px;letter-spacing:-0.2px;">Customize pivot table</span>
<div class="a" style="left:1861.20px;top:130.20px;width:90.00px;height:40.30px;background:#fff;border-radius:8px;border:1.4px solid #cdcdcd;box-sizing:border-box;"></div>
<svg class="a" style="left:1872px;top:141px;" width="20" height="20" viewBox="0 0 20 20"><circle cx="8" cy="8" r="5.3" fill="none" stroke="#8a8d91" stroke-width="1.4"/><path d="M12 12.2 L15.6 15.6" stroke="#8a8d91" stroke-width="1.6" stroke-linecap="round"/></svg>
<span class="t" style="top:140.00px;font-size:16px;line-height:20px;color:#8c8c8c;left:1897.30px;letter-spacing:-0.15px;">Search</span>
<span class="t" style="top:191.00px;font-size:16px;line-height:20px;color:#3a3a3a;left:1875.40px;letter-spacing:-0.2px;">Breakdowns</span>
<div class="a" style="left:0;top:0;width:1920px;height:1080px;will-change:transform;">
<span class="t" style="top:249.00px;font-size:16px;line-height:20px;color:#464646;left:1861.50px;letter-spacing:-0.15px;">Popular metrics</span>
<svg class="a" style="left:1861px;top:289px;" width="27" height="27" viewBox="0 0 27 27"><g transform="translate(0.20 0.00)"><rect x="0.75" y="0.75" width="25.1" height="25.1" rx="6" fill="#fff" stroke="#dadbdd" stroke-width="1.5"/><path d="M6.2 13.2 L11.2 18 L20.6 8.6" fill="none" stroke="#1d3140" stroke-width="2.3" stroke-linecap="round" stroke-linejoin="round"/></g></svg>
<span class="t" style="top:292.00px;font-size:16px;line-height:20px;color:#4c4c4c;left:1897.60px;letter-spacing:-0.15px;">Amount spent</span>
<svg class="a" style="left:1861px;top:325px;" width="27" height="27" viewBox="0 0 27 27"><g transform="translate(0.20 0.33)"><rect x="0.75" y="0.75" width="25.1" height="25.1" rx="6" fill="#fff" stroke="#dadbdd" stroke-width="1.5"/><path d="M6.2 13.2 L11.2 18 L20.6 8.6" fill="none" stroke="#1d3140" stroke-width="2.3" stroke-linecap="round" stroke-linejoin="round"/></g></svg>
<span class="t" style="top:328.00px;font-size:16px;line-height:20px;color:#4c4c4c;left:1897.60px;letter-spacing:-0.15px;">Impressions</span>
<svg class="a" style="left:1861px;top:361px;" width="27" height="28" viewBox="0 0 27 28"><g transform="translate(0.20 0.66)"><rect x="0.75" y="0.75" width="25.1" height="25.1" rx="6" fill="#fff" stroke="#dadbdd" stroke-width="1.5"/><path d="M6.2 13.2 L11.2 18 L20.6 8.6" fill="none" stroke="#1d3140" stroke-width="2.3" stroke-linecap="round" stroke-linejoin="round"/></g></svg>
<span class="t" style="top:365.00px;font-size:16px;line-height:20px;color:#4c4c4c;left:1897.60px;letter-spacing:-0.15px;">Reach</span>
<svg class="a" style="left:1861px;top:397px;" width="27" height="28" viewBox="0 0 27 28"><g transform="translate(0.20 0.99)"><rect x="0.75" y="0.75" width="25.1" height="25.1" rx="6" fill="#fff" stroke="#dadbdd" stroke-width="1.5"/><path d="M6.2 13.2 L11.2 18 L20.6 8.6" fill="none" stroke="#1d3140" stroke-width="2.3" stroke-linecap="round" stroke-linejoin="round"/></g></svg>
<span class="t" style="top:401.00px;font-size:16px;line-height:20px;color:#4c4c4c;left:1897.60px;letter-spacing:-0.15px;">Frequency</span>
<svg class="a" style="left:1861px;top:434px;" width="27" height="27" viewBox="0 0 27 27"><g transform="translate(0.20 0.32)"><rect x="0.75" y="0.75" width="25.1" height="25.1" rx="6" fill="#fff" stroke="#dadbdd" stroke-width="1.5"/><path d="M6.2 13.2 L11.2 18 L20.6 8.6" fill="none" stroke="#1d3140" stroke-width="2.3" stroke-linecap="round" stroke-linejoin="round"/></g></svg>
<span class="t" style="top:437.00px;font-size:16px;line-height:20px;color:#4c4c4c;left:1897.60px;letter-spacing:-0.15px;">Purchases</span>
<svg class="a" style="left:1861px;top:470px;" width="27" height="28" viewBox="0 0 27 28"><g transform="translate(0.20 0.65)"><rect x="0.75" y="0.75" width="25.1" height="25.1" rx="6" fill="#fff" stroke="#dadbdd" stroke-width="1.5"/><path d="M6.2 13.2 L11.2 18 L20.6 8.6" fill="none" stroke="#1d3140" stroke-width="2.3" stroke-linecap="round" stroke-linejoin="round"/></g></svg>
<span class="t" style="top:474.00px;font-size:16px;line-height:20px;color:#4c4c4c;left:1897.60px;letter-spacing:-0.15px;">Cost per purchase</span>
<svg class="a" style="left:1861px;top:506px;" width="27" height="28" viewBox="0 0 27 28"><g transform="translate(0.20 0.98)"><rect x="0.75" y="0.75" width="25.1" height="25.1" rx="6" fill="#fff" stroke="#dadbdd" stroke-width="1.5"/></g></svg>
<span class="t" style="top:510.00px;font-size:16px;line-height:20px;color:#4c4c4c;left:1897.60px;letter-spacing:-0.15px;">Purchase ROAS</span>
<svg class="a" style="left:1861px;top:543px;" width="27" height="27" viewBox="0 0 27 27"><g transform="translate(0.20 0.31)"><rect x="0.75" y="0.75" width="25.1" height="25.1" rx="6" fill="#fff" stroke="#dadbdd" stroke-width="1.5"/></g></svg>
<span class="t" style="top:546.00px;font-size:16px;line-height:20px;color:#4c4c4c;left:1897.60px;letter-spacing:-0.15px;">Link clicks</span>
<svg class="a" style="left:1861px;top:579px;" width="27" height="28" viewBox="0 0 27 28"><g transform="translate(0.20 0.64)"><rect x="0.75" y="0.75" width="25.1" height="25.1" rx="6" fill="#fff" stroke="#dadbdd" stroke-width="1.5"/></g></svg>
<span class="t" style="top:583.00px;font-size:16px;line-height:20px;color:#4c4c4c;left:1897.60px;letter-spacing:-1.0px;">CPC (all)</span>
<svg class="a" style="left:1861px;top:615px;" width="27" height="28" viewBox="0 0 27 28"><g transform="translate(0.20 0.97)"><rect x="0.75" y="0.75" width="25.1" height="25.1" rx="6" fill="#fff" stroke="#dadbdd" stroke-width="1.5"/><path d="M6.2 13.2 L11.2 18 L20.6 8.6" fill="none" stroke="#1d3140" stroke-width="2.3" stroke-linecap="round" stroke-linejoin="round"/></g></svg>
<span class="t" style="top:619.00px;font-size:16px;line-height:20px;color:#4c4c4c;left:1897.60px;letter-spacing:-0.15px;">Clicks (all)</span>
<svg class="a" style="left:1861px;top:652px;" width="27" height="27" viewBox="0 0 27 27"><g transform="translate(0.20 0.30)"><rect x="0.75" y="0.75" width="25.1" height="25.1" rx="6" fill="#fff" stroke="#dadbdd" stroke-width="1.5"/></g></svg>
<span class="t" style="top:655.00px;font-size:16px;line-height:20px;color:#4c4c4c;left:1897.60px;letter-spacing:-1.0px;">CPC (cost per link click)</span>
<svg class="a" style="left:1861px;top:688px;" width="27" height="28" viewBox="0 0 27 28"><g transform="translate(0.20 0.63)"><rect x="0.75" y="0.75" width="25.1" height="25.1" rx="6" fill="#fff" stroke="#dadbdd" stroke-width="1.5"/></g></svg>
<span class="t" style="top:692.00px;font-size:16px;line-height:20px;color:#4c4c4c;left:1897.60px;letter-spacing:-1.0px;">CPM (cost per 1,000)</span>
<svg class="a" style="left:1861px;top:724px;" width="27" height="28" viewBox="0 0 27 28"><g transform="translate(0.20 0.96)"><rect x="0.75" y="0.75" width="25.1" height="25.1" rx="6" fill="#fff" stroke="#dadbdd" stroke-width="1.5"/></g></svg>
<span class="t" style="top:728.00px;font-size:16px;line-height:20px;color:#4c4c4c;left:1897.60px;letter-spacing:-1.0px;">CTR (all)</span>
<span class="t" style="top:772.00px;font-size:16px;line-height:20px;color:#464646;left:1861.50px;letter-spacing:-0.15px;">Custom metrics</span>
<div class="a" style="left:1861.20px;top:808.00px;width:90.00px;height:40.30px;background:#f0f0f0;border-radius:8px;"></div>
<span class="t" style="top:863.00px;font-size:16px;line-height:20px;color:#464646;left:1861.50px;letter-spacing:-0.15px;">Performance</span>
<svg class="a" style="left:1861px;top:902px;" width="27" height="28" viewBox="0 0 27 28"><g transform="translate(0.20 0.70)"><rect x="0.75" y="0.75" width="25.1" height="25.1" rx="6" fill="#fff" stroke="#dadbdd" stroke-width="1.5"/><path d="M6.2 13.2 L11.2 18 L20.6 8.6" fill="none" stroke="#1d3140" stroke-width="2.3" stroke-linecap="round" stroke-linejoin="round"/></g></svg>
<span class="t" style="top:906.00px;font-size:16px;line-height:20px;color:#4c4c4c;left:1897.60px;letter-spacing:-0.15px;">Reach</span>
<svg class="a" style="left:1861px;top:939px;" width="27" height="27" viewBox="0 0 27 27"><g transform="translate(0.20 0.03)"><rect x="0.75" y="0.75" width="25.1" height="25.1" rx="6" fill="#fff" stroke="#dadbdd" stroke-width="1.5"/><path d="M6.2 13.2 L11.2 18 L20.6 8.6" fill="none" stroke="#1d3140" stroke-width="2.3" stroke-linecap="round" stroke-linejoin="round"/></g></svg>
<span class="t" style="top:942.00px;font-size:16px;line-height:20px;color:#4c4c4c;left:1897.60px;letter-spacing:-0.15px;">Frequency</span>
<svg class="a" style="left:1861px;top:975px;" width="27" height="27" viewBox="0 0 27 27"><g transform="translate(0.20 0.36)"><rect x="0.75" y="0.75" width="25.1" height="25.1" rx="6" fill="#fff" stroke="#dadbdd" stroke-width="1.5"/><path d="M6.2 13.2 L11.2 18 L20.6 8.6" fill="none" stroke="#1d3140" stroke-width="2.3" stroke-linecap="round" stroke-linejoin="round"/></g></svg>
<span class="t" style="top:978.00px;font-size:16px;line-height:20px;color:#4c4c4c;left:1897.60px;letter-spacing:-0.15px;">Impressions</span>
<svg class="a" style="left:1861px;top:1011px;" width="27" height="28" viewBox="0 0 27 28"><g transform="translate(0.20 0.69)"><rect x="0.75" y="0.75" width="25.1" height="25.1" rx="6" fill="#fff" stroke="#dadbdd" stroke-width="1.5"/><path d="M6.2 13.2 L11.2 18 L20.6 8.6" fill="none" stroke="#1d3140" stroke-width="2.3" stroke-linecap="round" stroke-linejoin="round"/></g></svg>
<span class="t" style="top:1015.00px;font-size:16px;line-height:20px;color:#4c4c4c;left:1897.60px;letter-spacing:-0.15px;">Amount spent</span>
</div>
</body></html>
